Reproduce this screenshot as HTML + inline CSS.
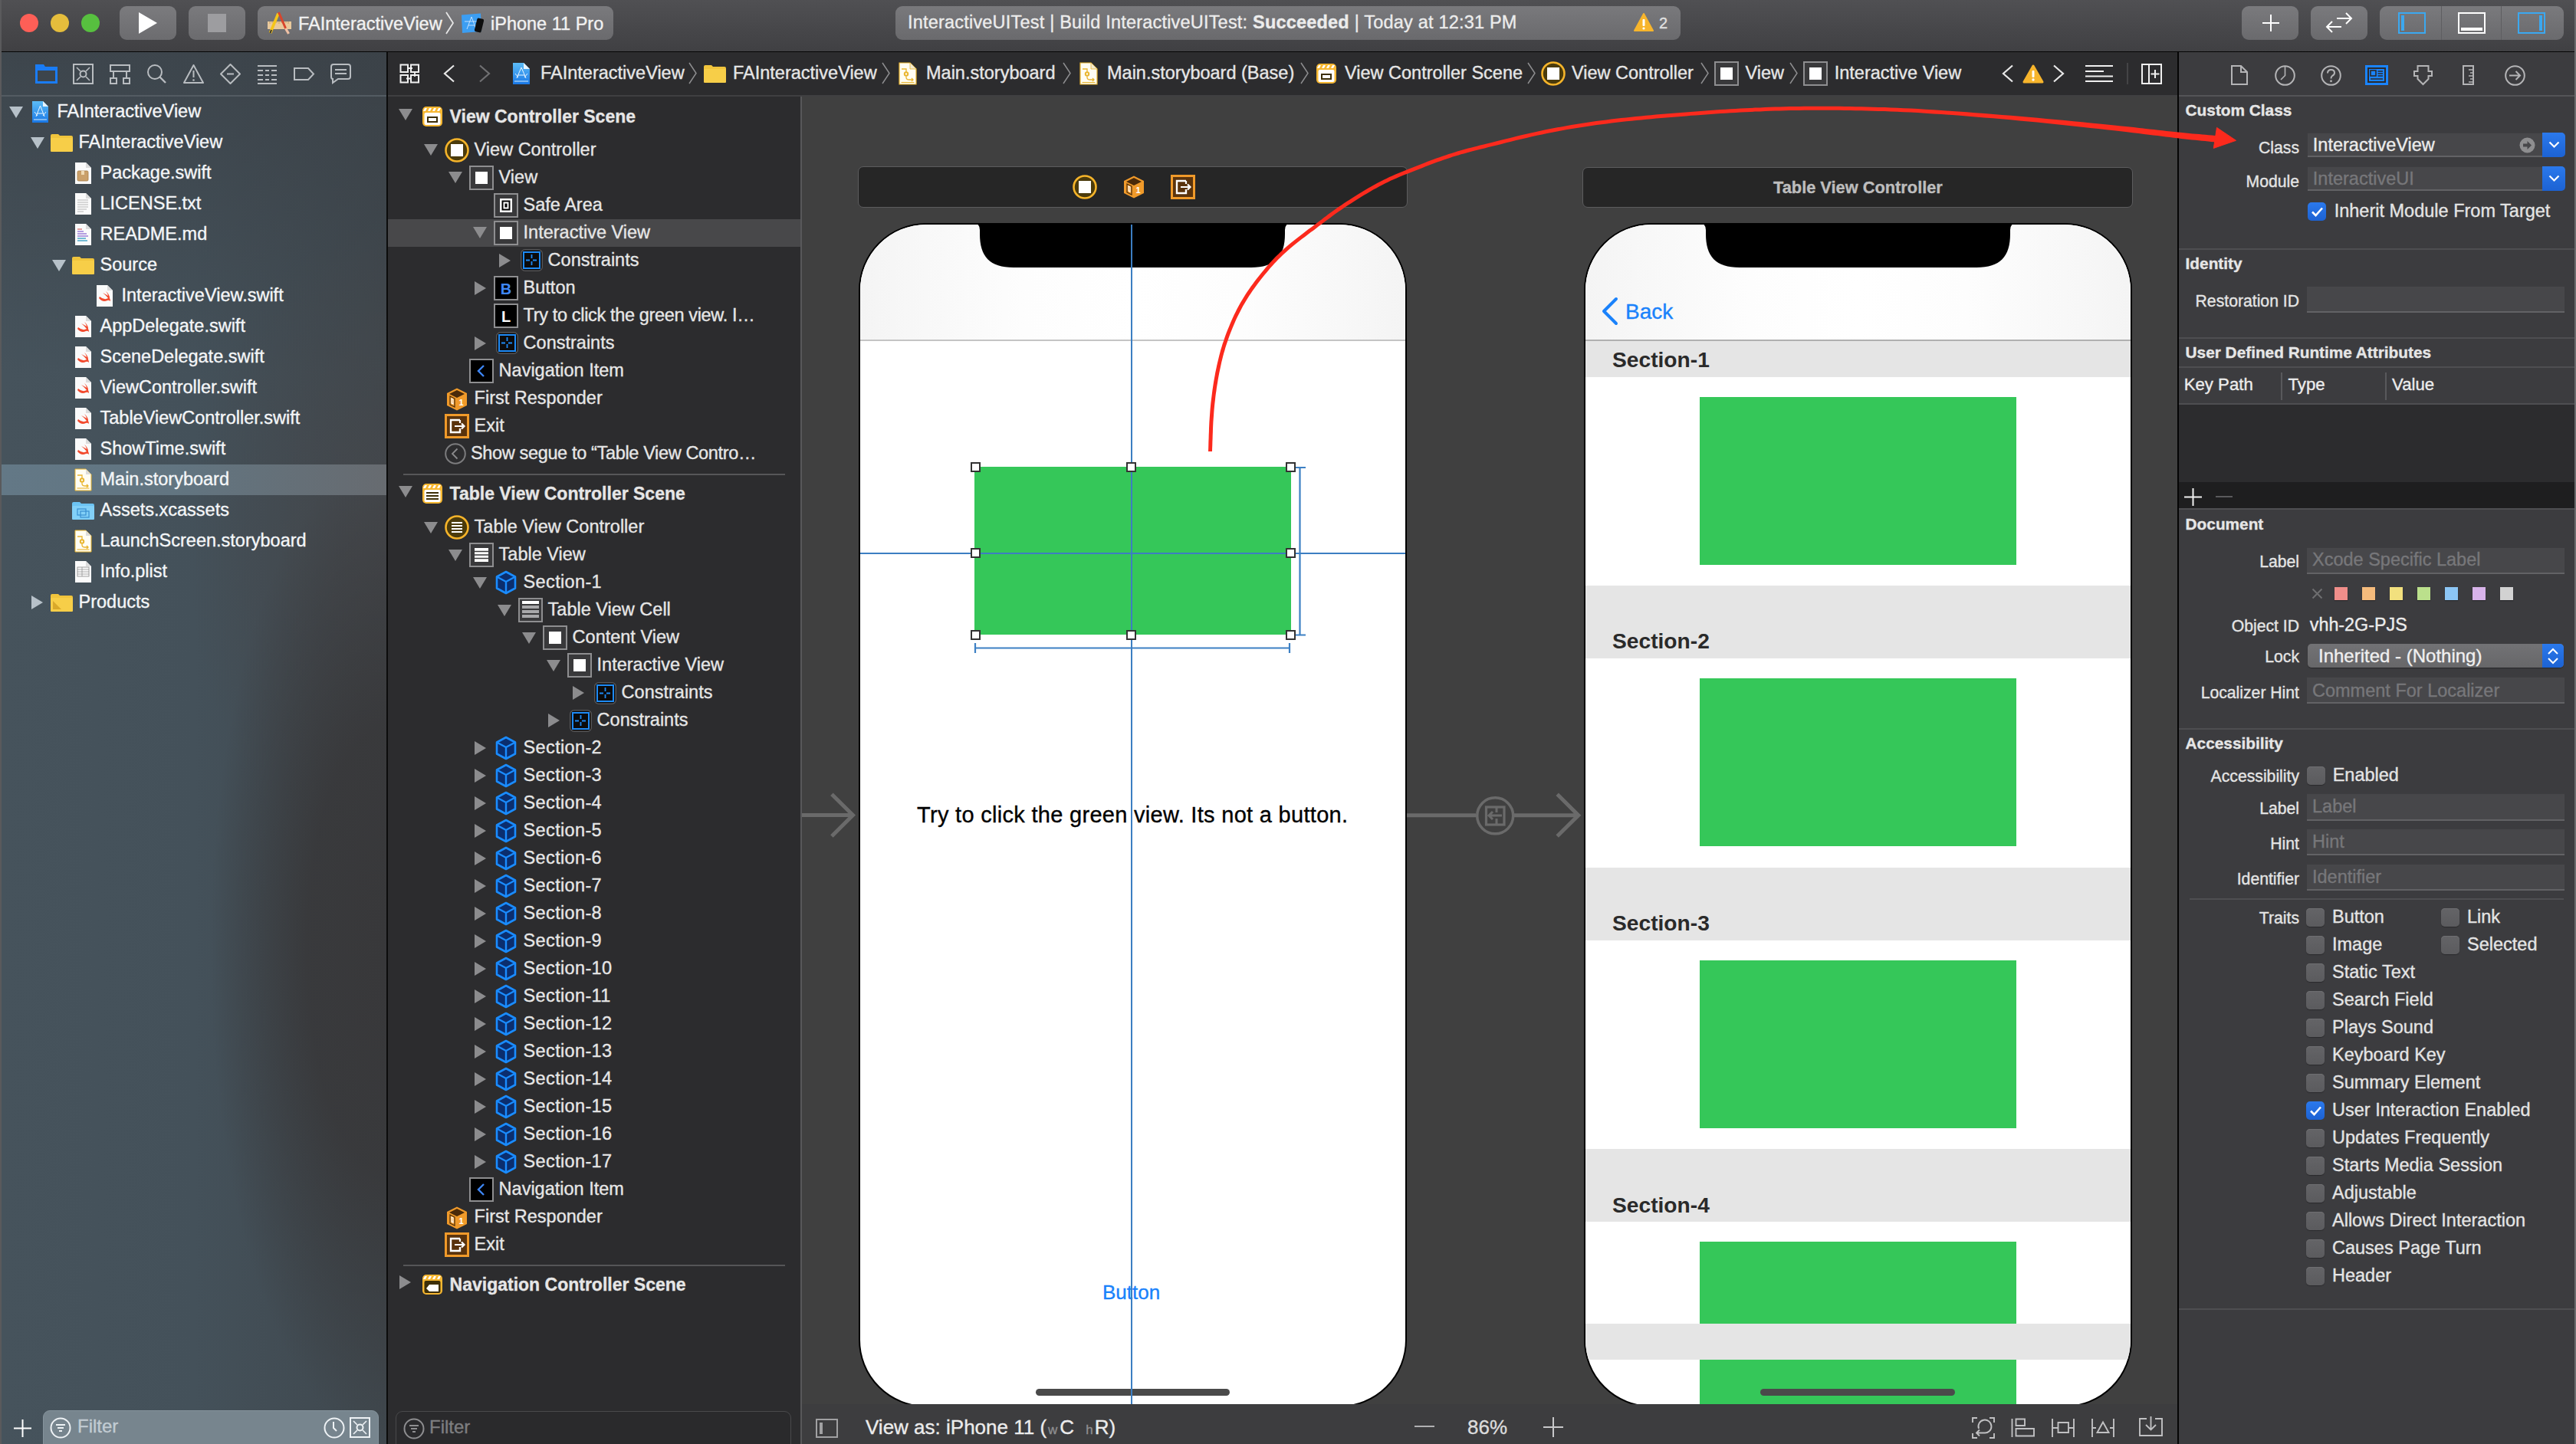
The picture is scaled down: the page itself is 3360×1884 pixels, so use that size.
<!DOCTYPE html>
<html><head><meta charset="utf-8"><title>Xcode</title>
<style>
*{margin:0;padding:0;box-sizing:border-box}
html,body{width:3360px;height:1884px;overflow:hidden;background:#404040;font-family:"Liberation Sans",sans-serif;position:relative}
.a{position:absolute}
.t{position:absolute;white-space:nowrap;line-height:1;-webkit-text-stroke:0.35px currentColor}
svg{position:absolute;overflow:visible}

</style></head><body>
<!-- TOOLBAR -->
<div class="a" style="left:0;top:0;width:3360px;height:67px;background:linear-gradient(#505053,#404043)"></div>
<div class="a" style="left:0;top:66.5px;width:3360px;height:1.5px;background:#050505"></div>
<div class="a" style="left:26px;top:18px;width:24px;height:24px;border-radius:50%;background:#fe5f57"></div>
<div class="a" style="left:66px;top:18px;width:24px;height:24px;border-radius:50%;background:#e5bd3c"></div>
<div class="a" style="left:106px;top:18px;width:24px;height:24px;border-radius:50%;background:#57c03f"></div>
<div class="a" style="left:156px;top:8px;width:74px;height:44px;border-radius:9px;background:linear-gradient(#7b7b7e,#6c6c6f)"></div>
<svg style="left:180px;top:15px" width="26" height="30"><path d="M1 1 L25 15 L1 29 Z" fill="#fff"/></svg>
<div class="a" style="left:246px;top:8px;width:74px;height:44px;border-radius:9px;background:linear-gradient(#7a7a7d,#6b6b6e)"></div>
<div class="a" style="left:271px;top:18px;width:24px;height:24px;background:#9d9da0"></div>
<div class="a" style="left:336px;top:8px;width:464px;height:44px;border-radius:9px;background:linear-gradient(#7a7a7d,#6a6a6d)"></div>
<svg style="left:348px;top:14px" width="34" height="32">
 <rect x="1" y="14" width="31" height="10" fill="#e9c99c"/>
 <path d="M4 14 V17 M7 14 V16 M10 14 V17 M13 14 V16 M16 14 V17 M19 14 V16 M22 14 V17 M25 14 V16 M28 14 V17" stroke="#b38a58" stroke-width="0.7"/>
 <path d="M4.5 29 L15 3.5" stroke="#f5c518" stroke-width="3.6"/>
 <path d="M4.5 29 L6 25" stroke="#333" stroke-width="2"/>
 <path d="M15.5 2 L25 24" stroke="#d8452c" stroke-width="3"/>
 <path d="M24.5 23 L28.5 30" stroke="#f0c1a4" stroke-width="3.2"/>
</svg>
<div class="t" style="left:389px;top:19.5px;font-size:23.5px;color:#f2f2f2">FAInteractiveView</div>
<svg style="left:580px;top:15px" width="14" height="30"><path d="M2 1 L11 15 L2 29" stroke="#e6e6e6" stroke-width="1.8" fill="none"/></svg>
<svg style="left:601px;top:17px" width="32" height="28">
 <path d="M1 2.5 L26 0.5 L27 24 L2 26 Z" fill="#3c9ef2"/>
 <path d="M8 21 L14 5 L20 21 M10 16 L18 16 M5 11 L23 11" stroke="#cfe6ff" stroke-width="0.9" fill="none"/>
 <rect x="19.5" y="7" width="9" height="18" rx="2" fill="#0e0e0e" transform="rotate(14 24 16)"/>
</svg>
<div class="t" style="left:640px;top:19.5px;font-size:23.5px;color:#f2f2f2">iPhone 11 Pro</div>
<div class="a" style="left:1168px;top:8px;width:1024px;height:44px;border-radius:9px;background:linear-gradient(#79797c,#6a6a6d)"></div>
<div class="t" style="left:1184px;top:18px;font-size:23.5px;letter-spacing:0.2px;color:#ececec">InteractiveUITest | Build InteractiveUITest: <b>Succeeded</b> | Today at 12:31 PM</div>
<svg style="left:2131px;top:17px" width="26" height="24"><path d="M13 1 L25 23 L1 23 Z" fill="#f7b52c" stroke="#f7b52c" stroke-linejoin="round" stroke-width="2"/><rect x="11.5" y="8" width="3" height="9" rx="1" fill="#fff"/><circle cx="13" cy="20" r="1.6" fill="#fff"/></svg>
<div class="t" style="left:2164px;top:20px;font-size:20px;color:#e0e0e0">2</div>
<div class="a" style="left:2924px;top:8px;width:74px;height:44px;border-radius:9px;background:linear-gradient(#7a7a7d,#6a6a6d)"></div>
<svg style="left:2950px;top:18px" width="24" height="24"><path d="M12 1 V23 M1 12 H23" stroke="#fff" stroke-width="2"/></svg>
<div class="a" style="left:3014px;top:8px;width:74px;height:44px;border-radius:9px;background:linear-gradient(#7a7a7d,#6a6a6d)"></div>
<svg style="left:3032px;top:16px" width="38" height="28"><path d="M16 8 H35 M28 1 L35 8 L28 15 M22 19 H3 M10 12 L3 19 L10 26" stroke="#fff" stroke-width="2" fill="none"/></svg>
<div class="a" style="left:3104px;top:8px;width:240px;height:44px;border-radius:9px;background:linear-gradient(#7a7a7d,#6a6a6d)"></div>
<div class="a" style="left:3184px;top:8px;width:1px;height:44px;background:#5e5e61"></div>
<div class="a" style="left:3262px;top:8px;width:1px;height:44px;background:#5e5e61"></div>
<svg style="left:3128px;top:16px" width="37" height="29"><rect x="1" y="1" width="34" height="26" fill="none" stroke="#3ba8f0" stroke-width="2"/><rect x="4" y="4" width="4" height="20" fill="#3ba8f0"/></svg>
<svg style="left:3206px;top:16px" width="37" height="29"><rect x="1" y="1" width="34" height="26" fill="none" stroke="#fff" stroke-width="2"/><rect x="4" y="20" width="28" height="4" fill="#fff"/></svg>
<svg style="left:3284px;top:16px" width="37" height="29"><rect x="1" y="1" width="34" height="26" fill="none" stroke="#3ba8f0" stroke-width="2"/><rect x="28" y="4" width="4" height="20" fill="#3ba8f0"/></svg>
<div class="a" style="left:0;top:0;width:2px;height:1884px;background:#5a5a5c"></div>
<!-- NAVIGATOR -->
<div class="a" style="left:2px;top:68px;width:502px;height:1816px;background:radial-gradient(ellipse 230px 640px at 100% 1170px,rgba(56,56,58,1) 0%,rgba(56,56,58,0.9) 45%,rgba(56,56,58,0) 100%),radial-gradient(ellipse 260px 420px at 100% 640px,rgba(70,70,73,0.7) 0%,rgba(70,70,73,0) 100%),linear-gradient(180deg,rgba(58,64,70,0.7) 0px,rgba(58,64,70,0) 420px),linear-gradient(90deg,#46535c 0%,#44515a 50%,#3f474d 100%)"></div>
<div class="a" style="left:504px;top:68px;width:2px;height:1816px;background:#0c0c0c"></div>
<div class="a" style="left:2px;top:124px;width:502px;height:2px;background:#535b62"></div>
<svg style="left:45px;top:83px" width="31" height="27"><path d="M1 1 H12 L14 4 H30 V26 H1 Z" fill="#1a7cf5"/><rect x="4" y="9" width="23" height="14" fill="#3d454c"/></svg>
<svg style="left:95px;top:83px" width="27" height="27"><rect x="1" y="1" width="25" height="25" fill="none" stroke="#b8bcc0" stroke-width="2"/><circle cx="13.5" cy="13.5" r="4" fill="none" stroke="#b8bcc0" stroke-width="2"/><path d="M5 5 L10 10 M22 5 L17 10 M5 22 L10 17 M22 22 L17 17" stroke="#b8bcc0" stroke-width="1.6"/></svg>
<svg style="left:143px;top:84px" width="27" height="26"><rect x="1" y="1" width="25" height="8" fill="none" stroke="#b8bcc0" stroke-width="2"/><rect x="1" y="18" width="8" height="7" fill="none" stroke="#b8bcc0" stroke-width="2"/><rect x="18" y="18" width="8" height="7" fill="none" stroke="#b8bcc0" stroke-width="2"/><path d="M5 9 V18 M22 9 V18" stroke="#b8bcc0" stroke-width="2"/></svg>
<svg style="left:191px;top:83px" width="27" height="27"><circle cx="11" cy="11" r="9" fill="none" stroke="#b8bcc0" stroke-width="2"/><path d="M17.5 17.5 L25 25" stroke="#b8bcc0" stroke-width="2.4"/></svg>
<svg style="left:239px;top:83px" width="27" height="27"><path d="M13.5 2 L26 25 H1 Z" fill="none" stroke="#b8bcc0" stroke-width="2" stroke-linejoin="round"/><path d="M13.5 9 V18" stroke="#b8bcc0" stroke-width="2"/><circle cx="13.5" cy="21.5" r="1.3" fill="#b8bcc0"/></svg>
<svg style="left:287px;top:83px" width="27" height="27"><path d="M13.5 1 L26 13.5 L13.5 26 L1 13.5 Z" fill="none" stroke="#b8bcc0" stroke-width="2" stroke-linejoin="round"/><path d="M9 13.5 H18" stroke="#b8bcc0" stroke-width="2"/></svg>
<svg style="left:335px;top:84px" width="27" height="26"><path d="M1 2 H26 M1 8 H8 M11 8 H16 M19 8 H26 M1 14 H8 M11 14 H16 M19 14 H26 M1 20 H8 M11 20 H16 M19 20 H26 M1 25 H26" stroke="#b8bcc0" stroke-width="2"/></svg>
<svg style="left:383px;top:88px" width="27" height="17"><path d="M1 1 H19 L26 8.5 L19 16 H1 Z" fill="none" stroke="#b8bcc0" stroke-width="2"/></svg>
<svg style="left:431px;top:83px" width="27" height="27"><path d="M4 1 H23 Q26 1 26 4 V17 Q26 20 23 20 H10 L3 25 V20 Q1 20 1 17 V4 Q1 1 4 1 Z" fill="none" stroke="#b8bcc0" stroke-width="2"/><path d="M6 8 H21 M6 13 H21" stroke="#b8bcc0" stroke-width="2"/></svg>
<div class="a" style="left:2px;top:606px;width:502px;height:40px;background:linear-gradient(90deg,#637886 0%,#627581 45%,#676b70 100%)"></div>
<svg style="left:11.5px;top:138.5px" width="18" height="15"><path d="M0 0 H18 L9 15 Z" fill="#b7c1c9"/></svg>
<svg style="left:41px;top:130.5px" width="23" height="30"><defs><linearGradient id="pg" x1="0" y1="0" x2="0" y2="1"><stop offset="0" stop-color="#5cbcf7"/><stop offset="1" stop-color="#1a78e6"/></linearGradient></defs><path d="M1 1 H15 L22 8 V29 H1 Z" fill="url(#pg)"/><path d="M15 1 V8 H22 Z" fill="#e8f4fd"/><path d="M3 25 H20" stroke="#d6ecfc" stroke-width="1"/><path d="M6 21 L11.5 7 L17 21 M7.5 17 H15.5 M4 15 L8 20 M19 15 L15 20" stroke="#e9f5ff" stroke-width="1" fill="none"/></svg>
<div class="t" style="left:74.5px;top:133.6px;font-size:23.5px;color:#f4f6f8">FAInteractiveView</div>
<svg style="left:39.5px;top:178.5px" width="18" height="15"><path d="M0 0 H18 L9 15 Z" fill="#b7c1c9"/></svg>
<svg style="left:64.5px;top:173.5px" width="31" height="25"><path d="M1 3 Q1 1 3 1 H11 L13 3 H28 Q30 3 30 5 V22 Q30 24 28 24 H3 Q1 24 1 22 Z" fill="#f0c43c"/><rect x="1" y="6" width="29" height="18" rx="1.5" fill="#f7ce48"/></svg>
<div class="t" style="left:102.5px;top:173.6px;font-size:23.5px;color:#f4f6f8">FAInteractiveView</div>
<svg style="left:96.5px;top:210.5px" width="23" height="30"><path d="M1 1 H15 L22 8 V29 H1 Z" fill="#fafafa" stroke="none" stroke-width="1"/><path d="M15 1 V8 H22" fill="#dcdcdc"/><rect x="4" y="12" width="14" height="13" rx="1.5" fill="#caa06a" stroke="#a57c45" stroke-width="0.8"/><rect x="9" y="12" width="4" height="5" fill="#efd9b3"/></svg>
<div class="t" style="left:130.5px;top:213.6px;font-size:23.5px;color:#f4f6f8">Package.swift</div>
<svg style="left:96.5px;top:250.5px" width="23" height="30"><path d="M1 1 H15 L22 8 V29 H1 Z" fill="#fafafa" stroke="none" stroke-width="1"/><path d="M15 1 V8 H22" fill="#dcdcdc"/><path d="M4 10 H18 M4 13 H18 M4 16 H18 M4 19 H18 M4 22 H16 M4 25 H12" stroke="#9a9a9a" stroke-width="0.7"/></svg>
<div class="t" style="left:130.5px;top:253.6px;font-size:23.5px;color:#f4f6f8">LICENSE.txt</div>
<svg style="left:96.5px;top:290.5px" width="23" height="30"><path d="M1 1 H15 L22 8 V29 H1 Z" fill="#fafafa" stroke="none" stroke-width="1"/><path d="M15 1 V8 H22" fill="#dcdcdc"/><path d="M4 11 H12 M4 14 H16 M4 17 H18" stroke="#9c7fd8" stroke-width="1.3"/><path d="M4 20 H15 M4 23 H17" stroke="#4aa7c9" stroke-width="1.3"/><path d="M4 8 H10" stroke="#d86f6f" stroke-width="1.3"/></svg>
<div class="t" style="left:130.5px;top:293.6px;font-size:23.5px;color:#f4f6f8">README.md</div>
<svg style="left:67.5px;top:338.5px" width="18" height="15"><path d="M0 0 H18 L9 15 Z" fill="#b7c1c9"/></svg>
<svg style="left:92.5px;top:333.5px" width="31" height="25"><path d="M1 3 Q1 1 3 1 H11 L13 3 H28 Q30 3 30 5 V22 Q30 24 28 24 H3 Q1 24 1 22 Z" fill="#f0c43c"/><rect x="1" y="6" width="29" height="18" rx="1.5" fill="#f7ce48"/></svg>
<div class="t" style="left:130.5px;top:333.6px;font-size:23.5px;color:#f4f6f8">Source</div>
<svg style="left:124.5px;top:370.5px" width="23" height="30"><path d="M1 1 H15 L22 8 V29 H1 Z" fill="#fafafa" stroke="none" stroke-width="1"/><path d="M15 1 V8 H22" fill="#dcdcdc"/><path d="M5 16 Q11 21 16 18 Q13 14 9 11 Q13 13 16 15 Q15 11 13 9 Q18 13 18 18 Q19 20 19 22 Q17 20 15 21 Q9 24 4 18 Z" fill="#f24a2e"/></svg>
<div class="t" style="left:158.5px;top:373.6px;font-size:23.5px;color:#f4f6f8">InteractiveView.swift</div>
<svg style="left:96.5px;top:410.5px" width="23" height="30"><path d="M1 1 H15 L22 8 V29 H1 Z" fill="#fafafa" stroke="none" stroke-width="1"/><path d="M15 1 V8 H22" fill="#dcdcdc"/><path d="M5 16 Q11 21 16 18 Q13 14 9 11 Q13 13 16 15 Q15 11 13 9 Q18 13 18 18 Q19 20 19 22 Q17 20 15 21 Q9 24 4 18 Z" fill="#f24a2e"/></svg>
<div class="t" style="left:130.5px;top:413.6px;font-size:23.5px;color:#f4f6f8">AppDelegate.swift</div>
<svg style="left:96.5px;top:450.5px" width="23" height="30"><path d="M1 1 H15 L22 8 V29 H1 Z" fill="#fafafa" stroke="none" stroke-width="1"/><path d="M15 1 V8 H22" fill="#dcdcdc"/><path d="M5 16 Q11 21 16 18 Q13 14 9 11 Q13 13 16 15 Q15 11 13 9 Q18 13 18 18 Q19 20 19 22 Q17 20 15 21 Q9 24 4 18 Z" fill="#f24a2e"/></svg>
<div class="t" style="left:130.5px;top:453.6px;font-size:23.5px;color:#f4f6f8">SceneDelegate.swift</div>
<svg style="left:96.5px;top:490.5px" width="23" height="30"><path d="M1 1 H15 L22 8 V29 H1 Z" fill="#fafafa" stroke="none" stroke-width="1"/><path d="M15 1 V8 H22" fill="#dcdcdc"/><path d="M5 16 Q11 21 16 18 Q13 14 9 11 Q13 13 16 15 Q15 11 13 9 Q18 13 18 18 Q19 20 19 22 Q17 20 15 21 Q9 24 4 18 Z" fill="#f24a2e"/></svg>
<div class="t" style="left:130.5px;top:493.6px;font-size:23.5px;color:#f4f6f8">ViewController.swift</div>
<svg style="left:96.5px;top:530.5px" width="23" height="30"><path d="M1 1 H15 L22 8 V29 H1 Z" fill="#fafafa" stroke="none" stroke-width="1"/><path d="M15 1 V8 H22" fill="#dcdcdc"/><path d="M5 16 Q11 21 16 18 Q13 14 9 11 Q13 13 16 15 Q15 11 13 9 Q18 13 18 18 Q19 20 19 22 Q17 20 15 21 Q9 24 4 18 Z" fill="#f24a2e"/></svg>
<div class="t" style="left:130.5px;top:533.6px;font-size:23.5px;color:#f4f6f8">TableViewController.swift</div>
<svg style="left:96.5px;top:570.5px" width="23" height="30"><path d="M1 1 H15 L22 8 V29 H1 Z" fill="#fafafa" stroke="none" stroke-width="1"/><path d="M15 1 V8 H22" fill="#dcdcdc"/><path d="M5 16 Q11 21 16 18 Q13 14 9 11 Q13 13 16 15 Q15 11 13 9 Q18 13 18 18 Q19 20 19 22 Q17 20 15 21 Q9 24 4 18 Z" fill="#f24a2e"/></svg>
<div class="t" style="left:130.5px;top:573.6px;font-size:23.5px;color:#f4f6f8">ShowTime.swift</div>
<svg style="left:96.5px;top:610.5px" width="23" height="30"><path d="M1 1 H15 L22 8 V29 H1 Z" fill="#fffdf3" stroke="#e9b52e" stroke-width="1"/><path d="M15 1 V8 H22" fill="#dcdcdc"/><path d="M4 9 H10 V13" stroke="#e9b52e" stroke-width="1.3" fill="none"/><circle cx="10" cy="15.5" r="3.2" fill="#e9b52e"/><circle cx="10" cy="15.5" r="1.2" fill="#fffdf3"/><path d="M10 18.5 V20 Q10 23 14 23 H18 M16 21 L18 23 L16 25" stroke="#e9b52e" stroke-width="1.3" fill="none"/><path d="M3.5 26 H19.5" stroke="#e9b52e" stroke-width="1.1"/></svg>
<div class="t" style="left:130.5px;top:613.6px;font-size:23.5px;color:#f4f6f8">Main.storyboard</div>
<svg style="left:92.5px;top:653.5px" width="31" height="25"><path d="M1 3 Q1 1 3 1 H11 L13 3 H28 Q30 3 30 5 V22 Q30 24 28 24 H3 Q1 24 1 22 Z" fill="#6cc3f2"/><rect x="1" y="6" width="29" height="18" rx="1.5" fill="#82d0f7"/><rect x="8" y="10" width="11" height="8" fill="none" stroke="#3a8fd0" stroke-width="1.2"/><rect x="12" y="13" width="11" height="8" fill="none" stroke="#3a8fd0" stroke-width="1.2"/></svg>
<div class="t" style="left:130.5px;top:653.6px;font-size:23.5px;color:#f4f6f8">Assets.xcassets</div>
<svg style="left:96.5px;top:690.5px" width="23" height="30"><path d="M1 1 H15 L22 8 V29 H1 Z" fill="#fffdf3" stroke="#e9b52e" stroke-width="1"/><path d="M15 1 V8 H22" fill="#dcdcdc"/><path d="M4 9 H10 V13" stroke="#e9b52e" stroke-width="1.3" fill="none"/><circle cx="10" cy="15.5" r="3.2" fill="#e9b52e"/><circle cx="10" cy="15.5" r="1.2" fill="#fffdf3"/><path d="M10 18.5 V20 Q10 23 14 23 H18 M16 21 L18 23 L16 25" stroke="#e9b52e" stroke-width="1.3" fill="none"/><path d="M3.5 26 H19.5" stroke="#e9b52e" stroke-width="1.1"/></svg>
<div class="t" style="left:130.5px;top:693.6px;font-size:23.5px;color:#f4f6f8">LaunchScreen.storyboard</div>
<svg style="left:96.5px;top:730.5px" width="23" height="30"><path d="M1 1 H15 L22 8 V29 H1 Z" fill="#fafafa" stroke="none" stroke-width="1"/><path d="M15 1 V8 H22" fill="#dcdcdc"/><rect x="4" y="9" width="15" height="12" fill="none" stroke="#8a8a8a" stroke-width="0.8"/><path d="M4 12 H19 M4 15 H19 M4 18 H19 M10 9 V21" stroke="#8a8a8a" stroke-width="0.7"/></svg>
<div class="t" style="left:130.5px;top:733.6px;font-size:23.5px;color:#f4f6f8">Info.plist</div>
<svg style="left:40.5px;top:776.5px" width="15" height="18"><path d="M0 0 V18 L15 9 Z" fill="#b7c1c9"/></svg>
<svg style="left:64.5px;top:773.5px" width="31" height="25"><path d="M1 3 Q1 1 3 1 H11 L13 3 H28 Q30 3 30 5 V22 Q30 24 28 24 H3 Q1 24 1 22 Z" fill="#f0c43c"/><rect x="1" y="6" width="29" height="18" rx="1.5" fill="#f7ce48"/><path d="M4 10 L4 21 H15 Z" fill="#d9a92a"/></svg>
<div class="t" style="left:102.5px;top:773.6px;font-size:23.5px;color:#f4f6f8">Products</div>
<svg style="left:18px;top:1852px" width="23" height="23"><path d="M11.5 0 V23 M0 11.5 H23" stroke="#fff" stroke-width="2"/></svg>
<div class="a" style="left:56px;top:1840px;width:438px;height:60px;border-radius:9px;background:#77858e;border:1px solid #85939c"></div>
<svg style="left:65px;top:1849px" width="28" height="28"><circle cx="14" cy="14" r="12.5" fill="none" stroke="#eef2f5" stroke-width="2"/><path d="M8 10 H20 M10 14 H18 M12 18 H16" stroke="#eef2f5" stroke-width="2"/></svg>
<div class="t" style="left:101px;top:1849px;font-size:24px;color:#c2ccd3">Filter</div>
<svg style="left:422px;top:1849px" width="28" height="28"><circle cx="14" cy="14" r="12.5" fill="none" stroke="#eef2f5" stroke-width="2"/><path d="M13 6 V14 L17 18" stroke="#eef2f5" stroke-width="2" fill="none"/></svg>
<svg style="left:456px;top:1849px" width="27" height="27"><rect x="1" y="1" width="25" height="25" fill="none" stroke="#eef2f5" stroke-width="2"/><circle cx="13.5" cy="13.5" r="4" fill="none" stroke="#eef2f5" stroke-width="2"/><path d="M5 5 L10 10 M22 5 L17 10 M5 22 L10 17 M22 22 L17 17" stroke="#eef2f5" stroke-width="1.6"/></svg><!-- JUMP BAR -->
<div class="a" style="left:506px;top:68px;width:2334px;height:56px;background:#2c2c2e"></div>
<div class="a" style="left:506px;top:124px;width:2334px;height:2px;background:#3f3f41"></div>
<svg style="left:521px;top:83px" width="27" height="26"><path d="M1.5 1.5 H11 V11 H1.5 Z M15 1.5 H25 V11 H15 Z M1.5 15 H11 V24.5 H1.5 Z M15 15 H25 V24.5 H15 Z" fill="none" stroke="#f0f0f0" stroke-width="2"/><path d="M11 6 H17 M20 11 V17 M9 19.5 H15" stroke="#f0f0f0" stroke-width="1.8"/></svg>
<svg style="left:577px;top:84px" width="17" height="24"><path d="M15 1.5 L3 12 L15 22.5" stroke="#e8e8e8" stroke-width="2.2" fill="none"/></svg>
<svg style="left:624px;top:84px" width="17" height="24"><path d="M2 1.5 L14 12 L2 22.5" stroke="#707072" stroke-width="2.2" fill="none"/></svg>
<svg style="left:668px;top:81px" width="24" height="30"><defs><linearGradient id="pg2" x1="0" y1="0" x2="0" y2="1"><stop offset="0" stop-color="#5cbcf7"/><stop offset="1" stop-color="#1a78e6"/></linearGradient></defs><path d="M1 1 H15 L23 9 V29 H1 Z" fill="url(#pg2)"/><path d="M15 1 V9 H23 Z" fill="#e8f4fd"/><path d="M3 25 H21" stroke="#d6ecfc" stroke-width="1"/><path d="M6 21 L12 7 L18 21 M7.5 17 H16.5 M4 15 L8 20 M20 15 L16 20" stroke="#e9f5ff" stroke-width="1" fill="none"/></svg>
<div class="t" style="left:705px;top:84.1px;font-size:23.5px;color:#e6e6e6;font-weight:400;">FAInteractiveView</div>
<svg style="left:898px;top:81px" width="11" height="29"><path d="M1 1 L10 14.5 L1 28" stroke="#8e8e90" stroke-width="1.5" fill="none"/></svg>
<svg style="left:917px;top:84px" width="31" height="25"><path d="M1 3 Q1 1 3 1 H11 L13 3 H28 Q30 3 30 5 V22 Q30 24 28 24 H3 Q1 24 1 22 Z" fill="#f0c43c"/><rect x="1" y="6" width="29" height="18" rx="1.5" fill="#f7ce48"/></svg>
<div class="t" style="left:956px;top:84.1px;font-size:23.5px;color:#e6e6e6;font-weight:400;">FAInteractiveView</div>
<svg style="left:1150px;top:81px" width="11" height="29"><path d="M1 1 L10 14.5 L1 28" stroke="#8e8e90" stroke-width="1.5" fill="none"/></svg>
<svg style="left:1172px;top:81px" width="24" height="30"><path d="M1 1 H15 L23 9 V29 H1 Z" fill="#fffdf3" stroke="#e9b52e" stroke-width="1.2"/><path d="M15 1 V9 H23" fill="#f3ead0" stroke="#e9b52e" stroke-width="0.8"/><path d="M4 9 H10 V13" stroke="#e9b52e" stroke-width="1.3" fill="none"/><circle cx="10" cy="15.5" r="3.2" fill="#e9b52e"/><circle cx="10" cy="15.5" r="1.2" fill="#fffdf3"/><path d="M10 18.5 V20 Q10 23 14 23 H19 M17 21 L19 23 L17 25" stroke="#e9b52e" stroke-width="1.3" fill="none"/><path d="M3.5 26.5 H20.5" stroke="#e9b52e" stroke-width="1.1"/></svg>
<div class="t" style="left:1208px;top:84.1px;font-size:23.5px;color:#e6e6e6;font-weight:400;">Main.storyboard</div>
<svg style="left:1386px;top:81px" width="11" height="29"><path d="M1 1 L10 14.5 L1 28" stroke="#8e8e90" stroke-width="1.5" fill="none"/></svg>
<svg style="left:1408px;top:81px" width="24" height="30"><path d="M1 1 H15 L23 9 V29 H1 Z" fill="#fffdf3" stroke="#e9b52e" stroke-width="1.2"/><path d="M15 1 V9 H23" fill="#f3ead0" stroke="#e9b52e" stroke-width="0.8"/><path d="M4 9 H10 V13" stroke="#e9b52e" stroke-width="1.3" fill="none"/><circle cx="10" cy="15.5" r="3.2" fill="#e9b52e"/><circle cx="10" cy="15.5" r="1.2" fill="#fffdf3"/><path d="M10 18.5 V20 Q10 23 14 23 H19 M17 21 L19 23 L17 25" stroke="#e9b52e" stroke-width="1.3" fill="none"/><path d="M3.5 26.5 H20.5" stroke="#e9b52e" stroke-width="1.1"/></svg>
<div class="t" style="left:1444px;top:84.1px;font-size:23.5px;color:#e6e6e6;font-weight:400;">Main.storyboard (Base)</div>
<svg style="left:1696px;top:81px" width="11" height="29"><path d="M1 1 L10 14.5 L1 28" stroke="#8e8e90" stroke-width="1.5" fill="none"/></svg>
<svg style="left:1716px;top:82px" width="28" height="28"><rect x="1" y="1" width="26" height="26" rx="5" fill="#f7b731"/><path d="M4 3 L7 3 L5 7 L2 7 Z M10 3 L13 3 L11 7 L8 7 Z M16 3 L19 3 L17 7 L14 7 Z M22 3 L25 3 L23 7 L20 7 Z" fill="#fff"/><rect x="3.5" y="9" width="21" height="16" rx="2" fill="#fff"/><rect x="8" y="15" width="12" height="6" fill="none" stroke="#3d2f08" stroke-width="2"/></svg>
<div class="t" style="left:1754px;top:84.1px;font-size:23.5px;color:#e6e6e6;font-weight:400;">View Controller Scene</div>
<svg style="left:1992px;top:81px" width="11" height="29"><path d="M1 1 L10 14.5 L1 28" stroke="#8e8e90" stroke-width="1.5" fill="none"/></svg>
<svg style="left:2010px;top:80px" width="32" height="32"><circle cx="16.0" cy="16.0" r="14.5" fill="#4b3b0c" stroke="#f5b42a" stroke-width="2.6"/><rect x="8.0" y="8.0" width="16" height="16" fill="#fff"/></svg>
<div class="t" style="left:2050px;top:84.1px;font-size:23.5px;color:#e6e6e6;font-weight:400;">View Controller</div>
<svg style="left:2218px;top:81px" width="11" height="29"><path d="M1 1 L10 14.5 L1 28" stroke="#8e8e90" stroke-width="1.5" fill="none"/></svg>
<svg style="left:2236px;top:80px" width="32" height="32"><rect x="1" y="1" width="30" height="30" fill="#39393b" stroke="#8e8e90" stroke-width="2"/><rect x="8" y="8" width="16" height="16" fill="#fff"/></svg>
<div class="t" style="left:2276.5px;top:84.1px;font-size:23.5px;color:#e6e6e6;font-weight:400;">View</div>
<svg style="left:2334px;top:81px" width="11" height="29"><path d="M1 1 L10 14.5 L1 28" stroke="#8e8e90" stroke-width="1.5" fill="none"/></svg>
<svg style="left:2352px;top:80px" width="32" height="32"><rect x="1" y="1" width="30" height="30" fill="#39393b" stroke="#8e8e90" stroke-width="2"/><rect x="8" y="8" width="16" height="16" fill="#fff"/></svg>
<div class="t" style="left:2392.7px;top:84.1px;font-size:23.5px;color:#e6e6e6;font-weight:400;">Interactive View</div>
<svg style="left:2610px;top:84px" width="17" height="24"><path d="M15 1.5 L3 12 L15 22.5" stroke="#e8e8e8" stroke-width="2.2" fill="none"/></svg>
<svg style="left:2638px;top:84px" width="28" height="25"><path d="M14 2 L26 23 H2 Z" fill="#f7b52c" stroke="#f7b52c" stroke-linejoin="round" stroke-width="3"/><rect x="12.5" y="8" width="3" height="9" rx="1" fill="#fff"/><circle cx="14" cy="20" r="1.7" fill="#fff"/></svg>
<svg style="left:2677px;top:84px" width="17" height="24"><path d="M2 1.5 L14 12 L2 22.5" stroke="#e8e8e8" stroke-width="2.2" fill="none"/></svg>
<svg style="left:2719px;top:84px" width="38" height="24"><path d="M1 2 H37 M1 9 H25 M1 15.5 H37 M1 22 H37" stroke="#f0f0f0" stroke-width="2"/></svg>
<div class="a" style="left:2774px;top:82px;width:2px;height:28px;background:#444446"></div>
<svg style="left:2793px;top:83px" width="27" height="27"><rect x="1" y="1" width="25" height="25" fill="none" stroke="#f0f0f0" stroke-width="2"/><path d="M10 1 V26 M18 8 V19 M12.5 13.5 H23.5" stroke="#f0f0f0" stroke-width="2"/></svg>
<!-- OUTLINE -->
<div class="a" style="left:506px;top:126px;width:538px;height:1758px;background:#2c2c2e"></div>
<div class="a" style="left:1044px;top:126px;width:2px;height:1758px;background:#58585a"></div>
<div class="a" style="left:506px;top:286px;width:538px;height:36px;background:#48484a"></div>
<svg style="left:520px;top:142px" width="18" height="15"><path d="M0 0 H18 L9 15 Z" fill="#8c8c8e"/></svg>
<svg style="left:550px;top:138px" width="28" height="28"><rect x="1" y="1" width="26" height="26" rx="5" fill="#f7b731"/><path d="M4 3 L7 3 L5 7 L2 7 Z M10 3 L13 3 L11 7 L8 7 Z M16 3 L19 3 L17 7 L14 7 Z M22 3 L25 3 L23 7 L20 7 Z" fill="#fff"/><rect x="3.5" y="9" width="21" height="16" rx="2" fill="#fff"/><rect x="8" y="15" width="12" height="6" fill="none" stroke="#3d2f08" stroke-width="2"/></svg>
<div class="t" style="left:586.6px;top:140.5px;font-size:23px;color:#e6e6e6;font-weight:700;">View Controller Scene</div>
<svg style="left:553px;top:188.1px" width="18" height="15"><path d="M0 0 H18 L9 15 Z" fill="#8c8c8e"/></svg>
<svg style="left:580px;top:179.6px" width="32" height="32"><circle cx="16.0" cy="16.0" r="14.5" fill="#4b3b0c" stroke="#f5b42a" stroke-width="2.6"/><rect x="8.0" y="8.0" width="16" height="16" fill="#fff"/></svg>
<div class="t" style="left:618.6px;top:183.7px;font-size:23.5px;color:#e6e6e6;font-weight:400;">View Controller</div>
<svg style="left:585px;top:224.1px" width="18" height="15"><path d="M0 0 H18 L9 15 Z" fill="#8c8c8e"/></svg>
<svg style="left:612px;top:215.6px" width="32" height="32"><rect x="1" y="1" width="30" height="30" fill="#39393b" stroke="#8e8e90" stroke-width="2"/><rect x="8" y="8" width="16" height="16" fill="#fff"/></svg>
<div class="t" style="left:650.6px;top:219.7px;font-size:23.5px;color:#e6e6e6;font-weight:400;">View</div>
<svg style="left:644px;top:251.60000000000002px" width="32" height="32"><rect x="1" y="1" width="30" height="30" fill="#39393b" stroke="#8e8e90" stroke-width="2"/><rect x="8" y="7" width="16" height="18" fill="#fff"/><rect x="10.5" y="9.5" width="11" height="13" fill="#000"/><rect x="12.5" y="11.5" width="7" height="9" fill="#fff"/><rect x="14.5" y="13.5" width="3" height="5" fill="#000"/></svg>
<div class="t" style="left:682.6px;top:255.7px;font-size:23.5px;color:#e6e6e6;font-weight:400;">Safe Area</div>
<svg style="left:617px;top:296.1px" width="18" height="15"><path d="M0 0 H18 L9 15 Z" fill="#8c8c8e"/></svg>
<svg style="left:644px;top:287.6px" width="32" height="32"><rect x="1" y="1" width="30" height="30" fill="#39393b" stroke="#8e8e90" stroke-width="2"/><rect x="8" y="8" width="16" height="16" fill="#fff"/></svg>
<div class="t" style="left:682.6px;top:291.7px;font-size:23.5px;color:#e6e6e6;font-weight:400;">Interactive View</div>
<svg style="left:651px;top:330.6px" width="15" height="18"><path d="M0 0 V18 L15 9 Z" fill="#8c8c8e"/></svg>
<svg style="left:678.5px;top:325.1px" width="29" height="29"><rect x="0.75" y="0.75" width="27.5" height="27.5" rx="5" fill="#0b0b0c" stroke="#555557" stroke-width="1.5"/><rect x="4" y="4" width="21" height="21" fill="none" stroke="#1e8af5" stroke-width="2"/><path d="M14.5 7 V12 M14.5 16 V21 M7 14.5 H12 M16 14.5 H21" stroke="#1e8af5" stroke-width="1.8"/></svg>
<div class="t" style="left:714.6px;top:327.7px;font-size:23.5px;color:#e6e6e6;font-weight:400;">Constraints</div>
<svg style="left:619px;top:366.6px" width="15" height="18"><path d="M0 0 V18 L15 9 Z" fill="#8c8c8e"/></svg>
<svg style="left:644px;top:359.6px" width="32" height="32"><rect x="1" y="1" width="30" height="30" fill="#000" stroke="#8e8e90" stroke-width="2"/><text x="16" y="24" font-family="Liberation Sans" font-weight="700" font-size="20" fill="#3e86f5" text-anchor="middle">B</text></svg>
<div class="t" style="left:682.6px;top:363.7px;font-size:23.5px;color:#e6e6e6;font-weight:400;">Button</div>
<svg style="left:644px;top:395.6px" width="32" height="32"><rect x="1" y="1" width="30" height="30" fill="#000" stroke="#8e8e90" stroke-width="2"/><text x="16" y="24" font-family="Liberation Sans" font-weight="700" font-size="20" fill="#fff" text-anchor="middle">L</text></svg>
<div class="t" style="left:682.6px;top:399.7px;font-size:23.5px;color:#e6e6e6;font-weight:400;letter-spacing:-0.35px;">Try to click the green view. I…</div>
<svg style="left:619px;top:438.6px" width="15" height="18"><path d="M0 0 V18 L15 9 Z" fill="#8c8c8e"/></svg>
<svg style="left:646.5px;top:433.1px" width="29" height="29"><rect x="0.75" y="0.75" width="27.5" height="27.5" rx="5" fill="#0b0b0c" stroke="#555557" stroke-width="1.5"/><rect x="4" y="4" width="21" height="21" fill="none" stroke="#1e8af5" stroke-width="2"/><path d="M14.5 7 V12 M14.5 16 V21 M7 14.5 H12 M16 14.5 H21" stroke="#1e8af5" stroke-width="1.8"/></svg>
<div class="t" style="left:682.6px;top:435.7px;font-size:23.5px;color:#e6e6e6;font-weight:400;">Constraints</div>
<svg style="left:612px;top:467.6px" width="32" height="32"><rect x="1" y="1" width="30" height="30" fill="#000" stroke="#8e8e90" stroke-width="2"/><path d="M19 9 L12 16 L19 23" stroke="#3e86f5" stroke-width="2.4" fill="none"/></svg>
<div class="t" style="left:650.6px;top:471.7px;font-size:23.5px;color:#e6e6e6;font-weight:400;">Navigation Item</div>
<svg style="left:581px;top:504.6px" width="30" height="32"><path d="M15 1.5 L28 8 V24 L15 30.5 L2 24 V8 Z" fill="#f09a2a"/><path d="M15 4 L25 9 L15 14 L5 9 Z" fill="#4a2a0a"/><path d="M6 12 L12 15 V26 L6 23 Z" fill="none" stroke="#4a2a0a" stroke-width="1.2"/><path d="M8 15 L10 16 V22 L8 21 Z" fill="none" stroke="#fff" stroke-width="1.2"/><text x="20.5" y="24" font-family="Liberation Sans" font-weight="700" font-size="11" fill="#fff" text-anchor="middle">1</text></svg>
<div class="t" style="left:618.6px;top:507.7px;font-size:23.5px;color:#e6e6e6;font-weight:400;">First Responder</div>
<svg style="left:580px;top:539.6px" width="32" height="32" viewBox="0 0 32 32"><rect x="1.5" y="1.5" width="29" height="29" fill="#5a330c" stroke="#f09a2a" stroke-width="3"/><path d="M20 8 H8 V24 H20 V19" stroke="#fff" stroke-width="2.4" fill="none"/><path d="M20 8 V12 M13 16 H25 M22 12.5 L25.5 16 L22 19.5" stroke="#fff" stroke-width="2.2" fill="none"/></svg>
<div class="t" style="left:618.6px;top:543.7px;font-size:23.5px;color:#e6e6e6;font-weight:400;">Exit</div>
<svg style="left:580px;top:577.6px" width="28" height="28"><circle cx="14" cy="14" r="12.8" fill="none" stroke="#7c7c7e" stroke-width="2"/><path d="M16.5 7.5 L10 14 L16.5 20.5" stroke="#8a8a8c" stroke-width="1.8" fill="none"/></svg>
<div class="t" style="left:614px;top:579.7px;font-size:23.5px;color:#e6e6e6;font-weight:400;letter-spacing:-0.35px;">Show segue to “Table View Contro…</div>
<svg style="left:520px;top:634px" width="18" height="15"><path d="M0 0 H18 L9 15 Z" fill="#8c8c8e"/></svg>
<svg style="left:550px;top:630px" width="28" height="28"><rect x="1" y="1" width="26" height="26" rx="5" fill="#f7b731"/><path d="M4 3 L7 3 L5 7 L2 7 Z M10 3 L13 3 L11 7 L8 7 Z M16 3 L19 3 L17 7 L14 7 Z M22 3 L25 3 L23 7 L20 7 Z" fill="#fff"/><rect x="3.5" y="9" width="21" height="16" rx="2" fill="#fff"/><path d="M6 13 H22 M6 17 H22 M6 21 H22" stroke="#3d2f08" stroke-width="1.8"/></svg>
<div class="t" style="left:586.6px;top:632.5px;font-size:23px;color:#e6e6e6;font-weight:700;">Table View Controller Scene</div>
<svg style="left:553px;top:680.5px" width="18" height="15"><path d="M0 0 H18 L9 15 Z" fill="#8c8c8e"/></svg>
<svg style="left:580px;top:672px" width="32" height="32"><circle cx="16.0" cy="16.0" r="14.5" fill="#4b3b0c" stroke="#f5b42a" stroke-width="2.6"/><path d="M9.0 10.0 H23.0 M9.0 14.0 H23.0 M9.0 18.0 H23.0 M9.0 22.0 H23.0" stroke="#fff" stroke-width="2"/></svg>
<div class="t" style="left:618.6px;top:676.1px;font-size:23.5px;color:#e6e6e6;font-weight:400;">Table View Controller</div>
<svg style="left:585px;top:716.5px" width="18" height="15"><path d="M0 0 H18 L9 15 Z" fill="#8c8c8e"/></svg>
<svg style="left:612px;top:708px" width="32" height="32"><rect x="1" y="1" width="30" height="30" fill="#39393b" stroke="#8e8e90" stroke-width="2"/><rect x="7" y="7" width="18" height="18" fill="#fff"/><path d="M7 11.5 H25 M7 16 H25 M7 20.5 H25" stroke="#39393b" stroke-width="1.5"/></svg>
<div class="t" style="left:650.6px;top:712.1px;font-size:23.5px;color:#e6e6e6;font-weight:400;">Table View</div>
<svg style="left:617px;top:752.5px" width="18" height="15"><path d="M0 0 H18 L9 15 Z" fill="#8c8c8e"/></svg>
<svg style="left:645px;top:744px" width="30" height="32"><path d="M15 2 L27 8.5 V23.5 L15 30 L3 23.5 V8.5 Z" fill="#0b2e6e" stroke="#1a8cff" stroke-width="2.6" stroke-linejoin="round"/><path d="M3 8.5 L15 15 L27 8.5 M15 15 V30" stroke="#1a8cff" stroke-width="2.4" fill="none"/></svg>
<div class="t" style="left:682.6px;top:748.1px;font-size:23.5px;color:#e6e6e6;font-weight:400;letter-spacing:0.35px;">Section-1</div>
<svg style="left:649px;top:788.5px" width="18" height="15"><path d="M0 0 H18 L9 15 Z" fill="#8c8c8e"/></svg>
<svg style="left:676px;top:780px" width="32" height="32"><rect x="1" y="1" width="30" height="30" fill="#39393b" stroke="#8e8e90" stroke-width="2"/><rect x="5" y="4" width="22" height="4" fill="#fff"/><rect x="5" y="10" width="22" height="4" fill="#a8a8aa"/><rect x="5" y="16" width="22" height="4" fill="#a8a8aa"/><rect x="5" y="22" width="22" height="4" fill="#a8a8aa"/></svg>
<div class="t" style="left:714.6px;top:784.1px;font-size:23.5px;color:#e6e6e6;font-weight:400;">Table View Cell</div>
<svg style="left:681px;top:824.5px" width="18" height="15"><path d="M0 0 H18 L9 15 Z" fill="#8c8c8e"/></svg>
<svg style="left:708px;top:816px" width="32" height="32"><rect x="1" y="1" width="30" height="30" fill="#39393b" stroke="#8e8e90" stroke-width="2"/><rect x="8" y="8" width="16" height="16" fill="#fff"/></svg>
<div class="t" style="left:746.6px;top:820.1px;font-size:23.5px;color:#e6e6e6;font-weight:400;">Content View</div>
<svg style="left:713px;top:860.5px" width="18" height="15"><path d="M0 0 H18 L9 15 Z" fill="#8c8c8e"/></svg>
<svg style="left:740px;top:852px" width="32" height="32"><rect x="1" y="1" width="30" height="30" fill="#39393b" stroke="#8e8e90" stroke-width="2"/><rect x="8" y="8" width="16" height="16" fill="#fff"/></svg>
<div class="t" style="left:778.6px;top:856.1px;font-size:23.5px;color:#e6e6e6;font-weight:400;">Interactive View</div>
<svg style="left:747px;top:895px" width="15" height="18"><path d="M0 0 V18 L15 9 Z" fill="#8c8c8e"/></svg>
<svg style="left:774.5px;top:889.5px" width="29" height="29"><rect x="0.75" y="0.75" width="27.5" height="27.5" rx="5" fill="#0b0b0c" stroke="#555557" stroke-width="1.5"/><rect x="4" y="4" width="21" height="21" fill="none" stroke="#1e8af5" stroke-width="2"/><path d="M14.5 7 V12 M14.5 16 V21 M7 14.5 H12 M16 14.5 H21" stroke="#1e8af5" stroke-width="1.8"/></svg>
<div class="t" style="left:810.6px;top:892.1px;font-size:23.5px;color:#e6e6e6;font-weight:400;">Constraints</div>
<svg style="left:715px;top:931px" width="15" height="18"><path d="M0 0 V18 L15 9 Z" fill="#8c8c8e"/></svg>
<svg style="left:742.5px;top:925.5px" width="29" height="29"><rect x="0.75" y="0.75" width="27.5" height="27.5" rx="5" fill="#0b0b0c" stroke="#555557" stroke-width="1.5"/><rect x="4" y="4" width="21" height="21" fill="none" stroke="#1e8af5" stroke-width="2"/><path d="M14.5 7 V12 M14.5 16 V21 M7 14.5 H12 M16 14.5 H21" stroke="#1e8af5" stroke-width="1.8"/></svg>
<div class="t" style="left:778.6px;top:928.1px;font-size:23.5px;color:#e6e6e6;font-weight:400;">Constraints</div>
<svg style="left:619px;top:967px" width="15" height="18"><path d="M0 0 V18 L15 9 Z" fill="#8c8c8e"/></svg>
<svg style="left:645px;top:960px" width="30" height="32"><path d="M15 2 L27 8.5 V23.5 L15 30 L3 23.5 V8.5 Z" fill="#0b2e6e" stroke="#1a8cff" stroke-width="2.6" stroke-linejoin="round"/><path d="M3 8.5 L15 15 L27 8.5 M15 15 V30" stroke="#1a8cff" stroke-width="2.4" fill="none"/></svg>
<div class="t" style="left:682.6px;top:964.1px;font-size:23.5px;color:#e6e6e6;font-weight:400;letter-spacing:0.35px;">Section-2</div>
<svg style="left:619px;top:1003px" width="15" height="18"><path d="M0 0 V18 L15 9 Z" fill="#8c8c8e"/></svg>
<svg style="left:645px;top:996px" width="30" height="32"><path d="M15 2 L27 8.5 V23.5 L15 30 L3 23.5 V8.5 Z" fill="#0b2e6e" stroke="#1a8cff" stroke-width="2.6" stroke-linejoin="round"/><path d="M3 8.5 L15 15 L27 8.5 M15 15 V30" stroke="#1a8cff" stroke-width="2.4" fill="none"/></svg>
<div class="t" style="left:682.6px;top:1000.1px;font-size:23.5px;color:#e6e6e6;font-weight:400;letter-spacing:0.35px;">Section-3</div>
<svg style="left:619px;top:1039px" width="15" height="18"><path d="M0 0 V18 L15 9 Z" fill="#8c8c8e"/></svg>
<svg style="left:645px;top:1032px" width="30" height="32"><path d="M15 2 L27 8.5 V23.5 L15 30 L3 23.5 V8.5 Z" fill="#0b2e6e" stroke="#1a8cff" stroke-width="2.6" stroke-linejoin="round"/><path d="M3 8.5 L15 15 L27 8.5 M15 15 V30" stroke="#1a8cff" stroke-width="2.4" fill="none"/></svg>
<div class="t" style="left:682.6px;top:1036.1px;font-size:23.5px;color:#e6e6e6;font-weight:400;letter-spacing:0.35px;">Section-4</div>
<svg style="left:619px;top:1075px" width="15" height="18"><path d="M0 0 V18 L15 9 Z" fill="#8c8c8e"/></svg>
<svg style="left:645px;top:1068px" width="30" height="32"><path d="M15 2 L27 8.5 V23.5 L15 30 L3 23.5 V8.5 Z" fill="#0b2e6e" stroke="#1a8cff" stroke-width="2.6" stroke-linejoin="round"/><path d="M3 8.5 L15 15 L27 8.5 M15 15 V30" stroke="#1a8cff" stroke-width="2.4" fill="none"/></svg>
<div class="t" style="left:682.6px;top:1072.1px;font-size:23.5px;color:#e6e6e6;font-weight:400;letter-spacing:0.35px;">Section-5</div>
<svg style="left:619px;top:1111px" width="15" height="18"><path d="M0 0 V18 L15 9 Z" fill="#8c8c8e"/></svg>
<svg style="left:645px;top:1104px" width="30" height="32"><path d="M15 2 L27 8.5 V23.5 L15 30 L3 23.5 V8.5 Z" fill="#0b2e6e" stroke="#1a8cff" stroke-width="2.6" stroke-linejoin="round"/><path d="M3 8.5 L15 15 L27 8.5 M15 15 V30" stroke="#1a8cff" stroke-width="2.4" fill="none"/></svg>
<div class="t" style="left:682.6px;top:1108.1px;font-size:23.5px;color:#e6e6e6;font-weight:400;letter-spacing:0.35px;">Section-6</div>
<svg style="left:619px;top:1147px" width="15" height="18"><path d="M0 0 V18 L15 9 Z" fill="#8c8c8e"/></svg>
<svg style="left:645px;top:1140px" width="30" height="32"><path d="M15 2 L27 8.5 V23.5 L15 30 L3 23.5 V8.5 Z" fill="#0b2e6e" stroke="#1a8cff" stroke-width="2.6" stroke-linejoin="round"/><path d="M3 8.5 L15 15 L27 8.5 M15 15 V30" stroke="#1a8cff" stroke-width="2.4" fill="none"/></svg>
<div class="t" style="left:682.6px;top:1144.1px;font-size:23.5px;color:#e6e6e6;font-weight:400;letter-spacing:0.35px;">Section-7</div>
<svg style="left:619px;top:1183px" width="15" height="18"><path d="M0 0 V18 L15 9 Z" fill="#8c8c8e"/></svg>
<svg style="left:645px;top:1176px" width="30" height="32"><path d="M15 2 L27 8.5 V23.5 L15 30 L3 23.5 V8.5 Z" fill="#0b2e6e" stroke="#1a8cff" stroke-width="2.6" stroke-linejoin="round"/><path d="M3 8.5 L15 15 L27 8.5 M15 15 V30" stroke="#1a8cff" stroke-width="2.4" fill="none"/></svg>
<div class="t" style="left:682.6px;top:1180.1px;font-size:23.5px;color:#e6e6e6;font-weight:400;letter-spacing:0.35px;">Section-8</div>
<svg style="left:619px;top:1219px" width="15" height="18"><path d="M0 0 V18 L15 9 Z" fill="#8c8c8e"/></svg>
<svg style="left:645px;top:1212px" width="30" height="32"><path d="M15 2 L27 8.5 V23.5 L15 30 L3 23.5 V8.5 Z" fill="#0b2e6e" stroke="#1a8cff" stroke-width="2.6" stroke-linejoin="round"/><path d="M3 8.5 L15 15 L27 8.5 M15 15 V30" stroke="#1a8cff" stroke-width="2.4" fill="none"/></svg>
<div class="t" style="left:682.6px;top:1216.1px;font-size:23.5px;color:#e6e6e6;font-weight:400;letter-spacing:0.35px;">Section-9</div>
<svg style="left:619px;top:1255px" width="15" height="18"><path d="M0 0 V18 L15 9 Z" fill="#8c8c8e"/></svg>
<svg style="left:645px;top:1248px" width="30" height="32"><path d="M15 2 L27 8.5 V23.5 L15 30 L3 23.5 V8.5 Z" fill="#0b2e6e" stroke="#1a8cff" stroke-width="2.6" stroke-linejoin="round"/><path d="M3 8.5 L15 15 L27 8.5 M15 15 V30" stroke="#1a8cff" stroke-width="2.4" fill="none"/></svg>
<div class="t" style="left:682.6px;top:1252.1px;font-size:23.5px;color:#e6e6e6;font-weight:400;letter-spacing:0.35px;">Section-10</div>
<svg style="left:619px;top:1291px" width="15" height="18"><path d="M0 0 V18 L15 9 Z" fill="#8c8c8e"/></svg>
<svg style="left:645px;top:1284px" width="30" height="32"><path d="M15 2 L27 8.5 V23.5 L15 30 L3 23.5 V8.5 Z" fill="#0b2e6e" stroke="#1a8cff" stroke-width="2.6" stroke-linejoin="round"/><path d="M3 8.5 L15 15 L27 8.5 M15 15 V30" stroke="#1a8cff" stroke-width="2.4" fill="none"/></svg>
<div class="t" style="left:682.6px;top:1288.1px;font-size:23.5px;color:#e6e6e6;font-weight:400;letter-spacing:0.35px;">Section-11</div>
<svg style="left:619px;top:1327px" width="15" height="18"><path d="M0 0 V18 L15 9 Z" fill="#8c8c8e"/></svg>
<svg style="left:645px;top:1320px" width="30" height="32"><path d="M15 2 L27 8.5 V23.5 L15 30 L3 23.5 V8.5 Z" fill="#0b2e6e" stroke="#1a8cff" stroke-width="2.6" stroke-linejoin="round"/><path d="M3 8.5 L15 15 L27 8.5 M15 15 V30" stroke="#1a8cff" stroke-width="2.4" fill="none"/></svg>
<div class="t" style="left:682.6px;top:1324.1px;font-size:23.5px;color:#e6e6e6;font-weight:400;letter-spacing:0.35px;">Section-12</div>
<svg style="left:619px;top:1363px" width="15" height="18"><path d="M0 0 V18 L15 9 Z" fill="#8c8c8e"/></svg>
<svg style="left:645px;top:1356px" width="30" height="32"><path d="M15 2 L27 8.5 V23.5 L15 30 L3 23.5 V8.5 Z" fill="#0b2e6e" stroke="#1a8cff" stroke-width="2.6" stroke-linejoin="round"/><path d="M3 8.5 L15 15 L27 8.5 M15 15 V30" stroke="#1a8cff" stroke-width="2.4" fill="none"/></svg>
<div class="t" style="left:682.6px;top:1360.1px;font-size:23.5px;color:#e6e6e6;font-weight:400;letter-spacing:0.35px;">Section-13</div>
<svg style="left:619px;top:1399px" width="15" height="18"><path d="M0 0 V18 L15 9 Z" fill="#8c8c8e"/></svg>
<svg style="left:645px;top:1392px" width="30" height="32"><path d="M15 2 L27 8.5 V23.5 L15 30 L3 23.5 V8.5 Z" fill="#0b2e6e" stroke="#1a8cff" stroke-width="2.6" stroke-linejoin="round"/><path d="M3 8.5 L15 15 L27 8.5 M15 15 V30" stroke="#1a8cff" stroke-width="2.4" fill="none"/></svg>
<div class="t" style="left:682.6px;top:1396.1px;font-size:23.5px;color:#e6e6e6;font-weight:400;letter-spacing:0.35px;">Section-14</div>
<svg style="left:619px;top:1435px" width="15" height="18"><path d="M0 0 V18 L15 9 Z" fill="#8c8c8e"/></svg>
<svg style="left:645px;top:1428px" width="30" height="32"><path d="M15 2 L27 8.5 V23.5 L15 30 L3 23.5 V8.5 Z" fill="#0b2e6e" stroke="#1a8cff" stroke-width="2.6" stroke-linejoin="round"/><path d="M3 8.5 L15 15 L27 8.5 M15 15 V30" stroke="#1a8cff" stroke-width="2.4" fill="none"/></svg>
<div class="t" style="left:682.6px;top:1432.1px;font-size:23.5px;color:#e6e6e6;font-weight:400;letter-spacing:0.35px;">Section-15</div>
<svg style="left:619px;top:1471px" width="15" height="18"><path d="M0 0 V18 L15 9 Z" fill="#8c8c8e"/></svg>
<svg style="left:645px;top:1464px" width="30" height="32"><path d="M15 2 L27 8.5 V23.5 L15 30 L3 23.5 V8.5 Z" fill="#0b2e6e" stroke="#1a8cff" stroke-width="2.6" stroke-linejoin="round"/><path d="M3 8.5 L15 15 L27 8.5 M15 15 V30" stroke="#1a8cff" stroke-width="2.4" fill="none"/></svg>
<div class="t" style="left:682.6px;top:1468.1px;font-size:23.5px;color:#e6e6e6;font-weight:400;letter-spacing:0.35px;">Section-16</div>
<svg style="left:619px;top:1507px" width="15" height="18"><path d="M0 0 V18 L15 9 Z" fill="#8c8c8e"/></svg>
<svg style="left:645px;top:1500px" width="30" height="32"><path d="M15 2 L27 8.5 V23.5 L15 30 L3 23.5 V8.5 Z" fill="#0b2e6e" stroke="#1a8cff" stroke-width="2.6" stroke-linejoin="round"/><path d="M3 8.5 L15 15 L27 8.5 M15 15 V30" stroke="#1a8cff" stroke-width="2.4" fill="none"/></svg>
<div class="t" style="left:682.6px;top:1504.1px;font-size:23.5px;color:#e6e6e6;font-weight:400;letter-spacing:0.35px;">Section-17</div>
<svg style="left:612px;top:1536px" width="32" height="32"><rect x="1" y="1" width="30" height="30" fill="#000" stroke="#8e8e90" stroke-width="2"/><path d="M19 9 L12 16 L19 23" stroke="#3e86f5" stroke-width="2.4" fill="none"/></svg>
<div class="t" style="left:650.6px;top:1540.1px;font-size:23.5px;color:#e6e6e6;font-weight:400;">Navigation Item</div>
<svg style="left:581px;top:1573px" width="30" height="32"><path d="M15 1.5 L28 8 V24 L15 30.5 L2 24 V8 Z" fill="#f09a2a"/><path d="M15 4 L25 9 L15 14 L5 9 Z" fill="#4a2a0a"/><path d="M6 12 L12 15 V26 L6 23 Z" fill="none" stroke="#4a2a0a" stroke-width="1.2"/><path d="M8 15 L10 16 V22 L8 21 Z" fill="none" stroke="#fff" stroke-width="1.2"/><text x="20.5" y="24" font-family="Liberation Sans" font-weight="700" font-size="11" fill="#fff" text-anchor="middle">1</text></svg>
<div class="t" style="left:618.6px;top:1576.1px;font-size:23.5px;color:#e6e6e6;font-weight:400;">First Responder</div>
<svg style="left:580px;top:1608px" width="32" height="32" viewBox="0 0 32 32"><rect x="1.5" y="1.5" width="29" height="29" fill="#5a330c" stroke="#f09a2a" stroke-width="3"/><path d="M20 8 H8 V24 H20 V19" stroke="#fff" stroke-width="2.4" fill="none"/><path d="M20 8 V12 M13 16 H25 M22 12.5 L25.5 16 L22 19.5" stroke="#fff" stroke-width="2.2" fill="none"/></svg>
<div class="t" style="left:618.6px;top:1612.1px;font-size:23.5px;color:#e6e6e6;font-weight:400;">Exit</div>
<svg style="left:521px;top:1664px" width="15" height="18"><path d="M0 0 V18 L15 9 Z" fill="#8c8c8e"/></svg>
<svg style="left:550px;top:1662px" width="28" height="28"><rect x="1" y="1" width="26" height="26" rx="5" fill="#f7b731"/><path d="M4 3 L7 3 L5 7 L2 7 Z M10 3 L13 3 L11 7 L8 7 Z M16 3 L19 3 L17 7 L14 7 Z M22 3 L25 3 L23 7 L20 7 Z" fill="#fff"/><rect x="3.5" y="9" width="21" height="16" rx="2" fill="#3d2f08"/><path d="M6 19 L10 14 H22 V23 H10 Z" fill="#fff"/></svg>
<div class="t" style="left:586.6px;top:1664.5px;font-size:23px;color:#e6e6e6;font-weight:700;">Navigation Controller Scene</div>
<div class="a" style="left:526px;top:618px;width:498px;height:2px;background:#565658"></div>
<div class="a" style="left:526px;top:1650px;width:498px;height:2px;background:#565658"></div>
<div class="a" style="left:516px;top:1841px;width:516px;height:60px;border-radius:9px;background:#2a2a2c;border:1.5px solid #4a4a4c"></div>
<svg style="left:526px;top:1850px" width="28" height="28"><circle cx="14" cy="14" r="12.5" fill="none" stroke="#8e8e90" stroke-width="2"/><path d="M8 10 H20 M10 14 H18 M12 18 H16" stroke="#8e8e90" stroke-width="2"/></svg>
<div class="t" style="left:560px;top:1849.7px;font-size:24px;color:#7e7e80;font-weight:400;">Filter</div><!-- CANVAS -->
<div class="a" style="left:1046px;top:126px;width:1794px;height:1706px;background:#404040;overflow:hidden">
<div class="a" style="left:73px;top:91px;width:717px;height:54px;background:#262626;border:1.5px solid #5c5c5e;border-radius:7px"></div>
<div class="a" style="left:1018px;top:92px;width:718px;height:53px;background:#262626;border:1.5px solid #5c5c5e;border-radius:7px"></div>
<div class="t" style="left:1267px;top:107.5px;font-size:21.8px;color:#bdbdbd;font-weight:700;">Table View Controller</div>
<svg style="left:353px;top:102px" width="32" height="32"><circle cx="16" cy="16" r="14.5" fill="#4b3b0c" stroke="#f5b42a" stroke-width="2.6"/><rect x="8" y="8" width="16" height="16" fill="#fff"/></svg>
<svg style="left:418px;top:102px" width="30" height="32"><path d="M15 1.5 L28 8 V24 L15 30.5 L2 24 V8 Z" fill="#f09a2a"/><path d="M15 4 L25 9 L15 14 L5 9 Z" fill="#4a2a0a"/><path d="M6 12 L12 15 V26 L6 23 Z" fill="none" stroke="#4a2a0a" stroke-width="1.2"/><path d="M8 15 L10 16 V22 L8 21 Z" fill="none" stroke="#fff" stroke-width="1.2"/><text x="20.5" y="24" font-family="Liberation Sans" font-weight="700" font-size="11" fill="#fff" text-anchor="middle">1</text></svg>
<svg style="left:481px;top:102px" width="32" height="32"><rect x="1.5" y="1.5" width="29" height="29" fill="#5a330c" stroke="#f09a2a" stroke-width="3"/><path d="M20 8 H8 V24 H20 V19" stroke="#fff" stroke-width="2.4" fill="none"/><path d="M20 8 V12 M13 16 H25 M22 12.5 L25.5 16 L22 19.5" stroke="#fff" stroke-width="2.2" fill="none"/></svg>
<svg style="left:0px;top:894px" width="80" height="90"><path d="M0 43.6 H66 M38.9 16.2 L66.5 43.6 L38.9 71" stroke="#6a6a6a" stroke-width="5" fill="none"/></svg>
<svg style="left:788px;top:894px" width="240" height="90"><path d="M0 43.7 H91 M141 43.7 H224 M197.2 16.3 L224.8 43.7 L197.2 71" stroke="#6a6a6a" stroke-width="5" fill="none"/><circle cx="116.2" cy="44.3" r="23.5" fill="none" stroke="#6a6a6a" stroke-width="3.5"/><rect x="104.5" y="33" width="23.5" height="23" fill="none" stroke="#6a6a6a" stroke-width="3.2"/><path d="M118 33 V40 M118 48 V56 M108 44 H125 M113 39 L108 44 L113 49" stroke="#6a6a6a" stroke-width="3" fill="none"/></svg>
<div class="a" style="left:74px;top:165px;width:715px;height:1545px;background:#fff;border:2px solid #000;border-radius:88px;overflow:hidden">
<div class="a" style="left:0px;top:0px;width:711px;height:151px;background:linear-gradient(90deg,#f4f4f4 0%,#f8f8f8 12%,#fdfdfd 30%,#ffffff 50%,#fdfdfd 70%,#f8f8f8 88%,#f4f4f4 100%)"></div>
<div class="a" style="left:0px;top:150px;width:711px;height:2px;background:#c4c4c4"></div>
<div class="a" style="left:149px;top:316px;width:413px;height:219px;background:#35c759"></div>
<div class="t" style="left:74px;top:755.5px;font-size:29px;color:#000;font-weight:400;letter-spacing:0.3px">Try to click the green view. Its not a button.</div>
<div class="t" style="left:316px;top:1380.0px;font-size:26px;color:#1a82fb;font-weight:400;">Button</div>
<div class="a" style="left:229px;top:1519px;width:253px;height:9px;background:#4a4a4a;border-radius:5px"></div>
</div>
<svg style="left:223px;top:165px" width="418" height="60"><path d="M0 0 Q9 0 9 9 V14 C9 44 22 58 53 58 H363 C394 58 407 44 407 14 V9 Q407 0 416 0 Z" fill="#000"/></svg>
<div class="a" style="left:428.5px;top:167px;width:2px;height:1540px;background:#3c7ec2"></div>
<div class="a" style="left:76px;top:594.5px;width:711px;height:2px;background:#3c7ec2"></div>
<svg style="left:614px;top:474px" width="60" height="240"><path d="M35.5 10 V228.5 M28 10 H43 M28 228.5 H43" stroke="#3d80c4" stroke-width="2.2" fill="none"/></svg>
<svg style="left:216px;top:704px" width="430" height="30"><path d="M10 15.5 H420 M10 9 V22 M420 9 V22" stroke="#3d80c4" stroke-width="2.2" fill="none"/></svg>
<div class="a" style="left:219.5px;top:476.5px;width:13px;height:13px;background:#fff;border:2px solid #333"></div>
<div class="a" style="left:219.5px;top:588.5px;width:13px;height:13px;background:#fff;border:2px solid #333"></div>
<div class="a" style="left:219.5px;top:695.5px;width:13px;height:13px;background:#fff;border:2px solid #333"></div>
<div class="a" style="left:422.5px;top:476.5px;width:13px;height:13px;background:#fff;border:2px solid #333"></div>
<div class="a" style="left:422.5px;top:695.5px;width:13px;height:13px;background:#fff;border:2px solid #333"></div>
<div class="a" style="left:630.5px;top:476.5px;width:13px;height:13px;background:#fff;border:2px solid #333"></div>
<div class="a" style="left:630.5px;top:588.5px;width:13px;height:13px;background:#fff;border:2px solid #333"></div>
<div class="a" style="left:630.5px;top:695.5px;width:13px;height:13px;background:#fff;border:2px solid #333"></div>
<div class="a" style="left:1020px;top:165px;width:715px;height:1545px;background:#fff;border:2px solid #000;border-radius:88px;overflow:hidden">
<div class="a" style="left:0px;top:0px;width:711px;height:151px;background:linear-gradient(90deg,#f4f4f4 0%,#f8f8f8 12%,#fdfdfd 30%,#ffffff 50%,#fdfdfd 70%,#f8f8f8 88%,#f4f4f4 100%)"></div>
<div class="a" style="left:0px;top:150px;width:711px;height:2px;background:#b0b0b0"></div>
<svg style="left:19px;top:94px" width="26" height="40"><path d="M21 3 L5 19 L21 35" stroke="#1a82fb" stroke-width="4" stroke-linecap="round" stroke-linejoin="round" fill="none"/></svg>
<div class="t" style="left:52px;top:99.8px;font-size:28px;color:#1a82fb;font-weight:400;">Back</div>
<div class="a" style="left:0px;top:152px;width:711px;height:47px;background:#e5e5e5"></div>
<div class="t" style="left:35px;top:162.1px;font-size:28.2px;color:#2a2a2a;font-weight:700;-webkit-text-stroke:0">Section-1</div>
<div class="a" style="left:149px;top:225px;width:413px;height:219px;background:#35c759"></div>
<div class="a" style="left:0px;top:471px;width:711px;height:95px;background:#e5e5e5"></div>
<div class="t" style="left:35px;top:529.1px;font-size:28.2px;color:#2a2a2a;font-weight:700;-webkit-text-stroke:0">Section-2</div>
<div class="a" style="left:149px;top:592px;width:413px;height:219px;background:#35c759"></div>
<div class="a" style="left:0px;top:838.7px;width:711px;height:95px;background:#e5e5e5"></div>
<div class="t" style="left:35px;top:896.8px;font-size:28.2px;color:#2a2a2a;font-weight:700;-webkit-text-stroke:0">Section-3</div>
<div class="a" style="left:149px;top:959.7px;width:413px;height:219px;background:#35c759"></div>
<div class="a" style="left:0px;top:1206.4px;width:711px;height:95px;background:#e5e5e5"></div>
<div class="t" style="left:35px;top:1264.5px;font-size:28.2px;color:#2a2a2a;font-weight:700;-webkit-text-stroke:0">Section-4</div>
<div class="a" style="left:149px;top:1327.4px;width:413px;height:219px;background:#35c759"></div>
<div class="a" style="left:0px;top:1433.5px;width:711px;height:47.5px;background:#e5e5e5"></div>
<div class="a" style="left:149px;top:1481px;width:413px;height:80px;background:#35c759"></div>
<div class="a" style="left:228px;top:1519px;width:254px;height:9px;background:#4a4a4a;border-radius:5px"></div>
</div>
<svg style="left:1170px;top:165px" width="417" height="60"><path d="M0 0 Q9 0 9 9 V14 C9 44 22 58 53 58 H362 C393 58 406 44 406 14 V9 Q406 0 415 0 Z" fill="#000"/></svg>
</div>
<div class="a" style="left:1046px;top:1832px;width:1794px;height:52px;background:#3d3d3f"></div>
<svg style="left:1064px;top:1851px" width="29" height="25"><rect x="1" y="1" width="27" height="23" fill="none" stroke="#a0a0a2" stroke-width="2"/><rect x="5" y="5" width="4" height="15" fill="#a0a0a2"/></svg>
<div class="t" style="left:1129px;top:1849.0px;font-size:26px;color:#ececec;font-weight:400;">View as: iPhone 11 (<span style="color:#8e8e90;font-size:17px;margin-left:2px;margin-right:3px">w</span>C <span style="color:#8e8e90;font-size:17px;margin-left:8px;margin-right:2px">h</span>R)</div>
<div class="a" style="left:1845px;top:1860px;width:26px;height:2px;background:#b0b0b2"></div>
<div class="t" style="left:1914px;top:1849.0px;font-size:26px;color:#dcdcdc;font-weight:400;">86%</div>
<svg style="left:2012px;top:1848px" width="28" height="28"><path d="M14 1 V27 M1 14 H27" stroke="#c8c8ca" stroke-width="2"/></svg>
<svg style="left:2570px;top:1847px" width="36" height="32"><path d="M3 9 V3 H9 M25 3 H31 V9 M31 23 V29 H25 M9 29 H3 V23" stroke="#c0c0c2" stroke-width="1.9" fill="none"/><path d="M11 17 A8.5 8.5 0 1 1 18 22.5 H8 M12 18.5 L8 22.5 L12 26.5" stroke="#c0c0c2" stroke-width="1.9" fill="none"/></svg>
<svg style="left:2622px;top:1849px" width="34" height="28"><path d="M2.5 2 V26 M7.5 2.5 H19 V11 H7.5 Z M7.5 15 H31 V24.5 H7.5 Z" stroke="#c0c0c2" stroke-width="1.9" fill="none"/></svg>
<svg style="left:2674px;top:1849px" width="34" height="28"><path d="M3 2 V26 M31 2 V26 M3 14 H10 M24 14 H31 M10.5 7 H24 V20 H10.5 Z" stroke="#c0c0c2" stroke-width="1.9" fill="none"/></svg>
<svg style="left:2726px;top:1849px" width="34" height="28"><path d="M3 2 V26 M31 2 V26 M3 14 H8 M26 14 H31 M17 6.5 L24.5 20 H9.5 Z" stroke="#c0c0c2" stroke-width="1.9" fill="none"/></svg>
<svg style="left:2789px;top:1847px" width="33" height="30"><path d="M11 4 H2 V26 H31 V4 H22 M16.5 1 V18.5 M10 12 L16.5 18.5 L23 12" stroke="#c0c0c2" stroke-width="1.9" fill="none"/></svg><!-- INSPECTOR -->
<div class="a" style="left:2840px;top:68px;width:2px;height:1816px;background:#050505"></div>
<div class="a" style="left:2842px;top:68px;width:518px;height:1816px;background:#3c3c3f"></div>
<div class="a" style="left:2842px;top:124px;width:518px;height:2px;background:#545457"></div>
<svg style="left:2910px;top:85px" width="22" height="26"><path d="M1 1 H13 L21 9 V25 H1 Z M13 1 V9 H21" fill="none" stroke="#b4b4b6" stroke-width="2"/></svg>
<svg style="left:2967px;top:85px" width="27" height="27"><circle cx="13.5" cy="13.5" r="12.3" fill="none" stroke="#b4b4b6" stroke-width="2"/><path d="M13.5 2 V13.5 L8 19" fill="none" stroke="#b4b4b6" stroke-width="1.6"/></svg>
<svg style="left:3027px;top:85px" width="27" height="27"><circle cx="13.5" cy="13.5" r="12.3" fill="none" stroke="#b4b4b6" stroke-width="2"/><path d="M9 10.5 Q9 6 13.5 6 Q18 6 18 10 Q18 12.5 15 14 Q13.5 15 13.5 17.5" fill="none" stroke="#b4b4b6" stroke-width="2"/><rect x="12.3" y="19.5" width="2.4" height="2.6" fill="#b4b4b6"/></svg>
<svg style="left:3085px;top:85px" width="30" height="26"><rect x="0" y="0" width="30" height="26" fill="#1a84ff"/><rect x="4" y="4" width="22" height="18" fill="none" stroke="#2a2a2c" stroke-width="2"/><rect x="7" y="7" width="7" height="7" fill="none" stroke="#2a2a2c" stroke-width="1.6"/><path d="M16.5 8 H23 M16.5 11 H23 M16.5 14 H23 M7 18 H23" stroke="#2a2a2c" stroke-width="1.6"/></svg>
<svg style="left:3147px;top:85px" width="27" height="27"><path d="M6.5 1 H20.5 V8 H25 V14 H20.5 V18 L13.5 25 L6.5 18 V14 H2 V8 H6.5 Z" fill="none" stroke="#b4b4b6" stroke-width="2" stroke-linejoin="miter"/></svg>
<svg style="left:3212px;top:85px" width="16" height="26"><rect x="1" y="1" width="13" height="24" fill="none" stroke="#b4b4b6" stroke-width="2"/><path d="M8 6 H14 M10 10 H14 M8 14 H14 M10 18 H14 M8 22 H14" stroke="#b4b4b6" stroke-width="1.6"/></svg>
<svg style="left:3267px;top:85px" width="27" height="27"><circle cx="13.5" cy="13.5" r="12.3" fill="none" stroke="#b4b4b6" stroke-width="2"/><path d="M6 13.5 H20 M14.5 8 L20 13.5 L14.5 19" fill="none" stroke="#b4b4b6" stroke-width="2"/></svg>
<div class="t" style="left:2850.6px;top:134.2px;font-size:20.8px;color:#e6e6e6;font-weight:700;">Custom Class</div>
<div class="t" style="left:2599px;width:400px;text-align:right;top:181.8px;font-size:21.2px;color:#e4e4e4;font-weight:400">Class</div>
<div class="a" style="left:3010px;top:173px;width:306px;height:32px;background:#47474a;border-top:1px solid #3d3d40;border-bottom:2px solid #626265"></div>
<div class="t" style="left:3016.8px;top:177.8px;font-size:23.5px;color:#ececec;font-weight:400;">InteractiveView</div>
<svg style="left:3286px;top:178.6px" width="21" height="21"><circle cx="10.5" cy="10.5" r="10" fill="#8e8e90"/><path d="M5 8.5 H10.5 V5 L16 10.5 L10.5 16 V12.5 H5 Z" fill="#47474a"/></svg>
<div class="a" style="left:3316px;top:173px;width:30px;height:32px;background:linear-gradient(#2b79ec,#1c62d3);border-radius:0 5px 5px 0"></div><svg style="left:3324px;top:184.0px" width="15" height="10"><path d="M1.5 1.5 L7.5 7.5 L13.5 1.5" stroke="#fff" stroke-width="2.2" fill="none"/></svg>
<div class="t" style="left:2599px;width:400px;text-align:right;top:225.7px;font-size:21.2px;color:#e4e4e4;font-weight:400">Module</div>
<div class="a" style="left:3010px;top:217px;width:306px;height:32px;background:#47474a;border-top:1px solid #3d3d40;border-bottom:2px solid #626265"></div>
<div class="t" style="left:3016.8px;top:221.8px;font-size:23.5px;color:#77777a;font-weight:400;">InteractiveUI</div>
<div class="a" style="left:3316px;top:217px;width:30px;height:32px;background:linear-gradient(#2b79ec,#1c62d3);border-radius:0 5px 5px 0"></div><svg style="left:3324px;top:228.0px" width="15" height="10"><path d="M1.5 1.5 L7.5 7.5 L13.5 1.5" stroke="#fff" stroke-width="2.2" fill="none"/></svg>
<div class="a" style="left:3010px;top:264px;width:24px;height:24px;background:linear-gradient(#2b79ec,#1c62d3);border-radius:5px"></div><svg style="left:3014px;top:269px" width="17" height="15"><path d="M2 7.5 L6.5 12 L15 2.5" stroke="#fff" stroke-width="2.6" fill="none"/></svg>
<div class="t" style="left:3044.7px;top:263.8px;font-size:23.5px;color:#e4e4e4;font-weight:400;">Inherit Module From Target</div>
<div class="a" style="left:2842px;top:324px;width:518px;height:2px;background:#4e4e51"></div>
<div class="t" style="left:2850.6px;top:334.4px;font-size:20.8px;color:#e6e6e6;font-weight:700;">Identity</div>
<div class="t" style="left:2599px;width:400px;text-align:right;top:381.6px;font-size:21.2px;color:#e4e4e4;font-weight:400">Restoration ID</div>
<div class="a" style="left:3009px;top:373px;width:336px;height:35px;background:#47474a;border-top:1px solid #3d3d40;border-bottom:2px solid #626265"></div>
<div class="a" style="left:2842px;top:440px;width:518px;height:2px;background:#4e4e51"></div>
<div class="t" style="left:2850.6px;top:450.4px;font-size:20.8px;color:#e6e6e6;font-weight:700;">User Defined Runtime Attributes</div>
<div class="a" style="left:2842px;top:478px;width:518px;height:2px;background:#4e4e51"></div>
<div class="t" style="left:2848.7px;top:491.2px;font-size:22.2px;color:#ececec;font-weight:400;">Key Path</div>
<div class="t" style="left:2984.5px;top:491.2px;font-size:22.2px;color:#ececec;font-weight:400;">Type</div>
<div class="t" style="left:3120px;top:491.2px;font-size:22.2px;color:#ececec;font-weight:400;">Value</div>
<div class="a" style="left:2975px;top:486px;width:1.5px;height:36px;background:#59595c"></div>
<div class="a" style="left:3111px;top:486px;width:1.5px;height:36px;background:#59595c"></div>
<div class="a" style="left:2842px;top:526px;width:518px;height:2px;background:#4e4e51"></div>
<div class="a" style="left:2842px;top:528px;width:518px;height:101.5px;background:#2c2c2e"></div>
<div class="a" style="left:2842px;top:629px;width:518px;height:35px;background:#1e1e1f"></div>
<svg style="left:2849px;top:637px" width="23" height="23"><path d="M11.5 0 V23 M0 11.5 H23" stroke="#f0f0f0" stroke-width="2"/></svg>
<div class="a" style="left:2890px;top:647px;width:22px;height:2px;background:#5a5a5c"></div>
<div class="a" style="left:2842px;top:663px;width:518px;height:2px;background:#4e4e51"></div>
<div class="t" style="left:2850.6px;top:673.9px;font-size:20.8px;color:#e6e6e6;font-weight:700;">Document</div>
<div class="t" style="left:2599px;width:400px;text-align:right;top:722.1px;font-size:21.2px;color:#e4e4e4;font-weight:400">Label</div>
<div class="a" style="left:3009px;top:714px;width:336px;height:35px;background:#47474a;border-top:1px solid #3d3d40;border-bottom:2px solid #626265"></div>
<div class="t" style="left:3016px;top:719.1px;font-size:23.5px;color:#77777a;font-weight:400;">Xcode Specific Label</div>
<svg style="left:3015px;top:767px" width="15" height="15"><path d="M1.5 1.5 L13.5 13.5 M13.5 1.5 L1.5 13.5" stroke="#6e6e70" stroke-width="2"/></svg>
<div class="a" style="left:3045.0px;top:766px;width:17px;height:17px;background:#f08e8a;box-shadow:0 1px 1px rgba(0,0,0,0.3)"></div>
<div class="a" style="left:3081.1px;top:766px;width:17px;height:17px;background:#f5bb7c;box-shadow:0 1px 1px rgba(0,0,0,0.3)"></div>
<div class="a" style="left:3117.2px;top:766px;width:17px;height:17px;background:#f2e07e;box-shadow:0 1px 1px rgba(0,0,0,0.3)"></div>
<div class="a" style="left:3153.0px;top:766px;width:17px;height:17px;background:#bbe08c;box-shadow:0 1px 1px rgba(0,0,0,0.3)"></div>
<div class="a" style="left:3189.1px;top:766px;width:17px;height:17px;background:#8cc6f5;box-shadow:0 1px 1px rgba(0,0,0,0.3)"></div>
<div class="a" style="left:3225.2px;top:766px;width:17px;height:17px;background:#d8b3ea;box-shadow:0 1px 1px rgba(0,0,0,0.3)"></div>
<div class="a" style="left:3261.0px;top:766px;width:17px;height:17px;background:#d2d2d2;box-shadow:0 1px 1px rgba(0,0,0,0.3)"></div>
<div class="t" style="left:2599px;width:400px;text-align:right;top:806.1px;font-size:21.2px;color:#e4e4e4;font-weight:400">Object ID</div>
<div class="t" style="left:3012.8px;top:804.3px;font-size:23.3px;color:#ececec;font-weight:400;">vhh-2G-PJS</div>
<div class="t" style="left:2599px;width:400px;text-align:right;top:846.1px;font-size:21.2px;color:#e4e4e4;font-weight:400">Lock</div>
<div class="a" style="left:3010px;top:840px;width:334px;height:31px;background:linear-gradient(#727275,#676769);border-radius:5px;box-shadow:0 1px 1px rgba(0,0,0,0.35)"></div>
<div class="a" style="left:3316px;top:840px;width:28px;height:31px;background:linear-gradient(#2b79ec,#1c62d3);border-radius:0 5px 5px 0"></div>
<svg style="left:3322px;top:845px" width="16" height="22"><path d="M2 8 L8 2 L14 8 M2 14 L8 20 L14 14" stroke="#fff" stroke-width="2" fill="none"/></svg>
<div class="t" style="left:3024px;top:843.7px;font-size:24px;color:#f0f0f0;font-weight:400;">Inherited - (Nothing)</div>
<div class="t" style="left:2599px;width:400px;text-align:right;top:892.6px;font-size:21.2px;color:#e4e4e4;font-weight:400">Localizer Hint</div>
<div class="a" style="left:3009px;top:883px;width:336px;height:35px;background:#47474a;border-top:1px solid #3d3d40;border-bottom:2px solid #626265"></div>
<div class="t" style="left:3016px;top:889.6px;font-size:23.5px;color:#77777a;font-weight:400;">Comment For Localizer</div>
<div class="a" style="left:2842px;top:950px;width:518px;height:2px;background:#4e4e51"></div>
<div class="t" style="left:2850.6px;top:960.4px;font-size:20.8px;color:#e6e6e6;font-weight:700;">Accessibility</div>
<div class="t" style="left:2599px;width:400px;text-align:right;top:1001.8px;font-size:21.2px;color:#e4e4e4;font-weight:400">Accessibility</div>
<div class="a" style="left:3008.5px;top:1000px;width:24px;height:24px;background:linear-gradient(#646467,#5b5b5e);border-radius:5px;box-shadow:inset 0 1px 0 #6e6e71,0 1px 1px rgba(0,0,0,0.3)"></div>
<div class="t" style="left:3042.7px;top:999.8px;font-size:23.5px;color:#e4e4e4;font-weight:400;">Enabled</div>
<div class="t" style="left:2599px;width:400px;text-align:right;top:1044.1px;font-size:21.2px;color:#e4e4e4;font-weight:400">Label</div>
<div class="a" style="left:3009px;top:1035px;width:336px;height:36px;background:#47474a;border-top:1px solid #3d3d40;border-bottom:2px solid #626265"></div>
<div class="t" style="left:3016px;top:1041.1px;font-size:23.5px;color:#77777a;font-weight:400;">Label</div>
<div class="t" style="left:2599px;width:400px;text-align:right;top:1089.8px;font-size:21.2px;color:#e4e4e4;font-weight:400">Hint</div>
<div class="a" style="left:3009px;top:1081px;width:336px;height:35px;background:#47474a;border-top:1px solid #3d3d40;border-bottom:2px solid #626265"></div>
<div class="t" style="left:3016px;top:1086.8px;font-size:23.5px;color:#77777a;font-weight:400;">Hint</div>
<div class="t" style="left:2599px;width:400px;text-align:right;top:1136.1px;font-size:21.2px;color:#e4e4e4;font-weight:400">Identifier</div>
<div class="a" style="left:3009px;top:1127px;width:336px;height:35px;background:#47474a;border-top:1px solid #3d3d40;border-bottom:2px solid #626265"></div>
<div class="t" style="left:3016px;top:1133.1px;font-size:23.5px;color:#77777a;font-weight:400;">Identifier</div>
<div class="a" style="left:2856px;top:1172px;width:488px;height:2px;background:#4e4e51"></div>
<div class="t" style="left:2599px;width:400px;text-align:right;top:1186.7px;font-size:21.2px;color:#e4e4e4;font-weight:400">Traits</div>
<div class="a" style="left:3008px;top:1184.6px;width:24px;height:24px;background:linear-gradient(#646467,#5b5b5e);border-radius:5px;box-shadow:inset 0 1px 0 #6e6e71,0 1px 1px rgba(0,0,0,0.3)"></div>
<div class="t" style="left:3042px;top:1184.7px;font-size:23.5px;color:#e4e4e4;font-weight:400;">Button</div>
<div class="a" style="left:3008px;top:1220.6px;width:24px;height:24px;background:linear-gradient(#646467,#5b5b5e);border-radius:5px;box-shadow:inset 0 1px 0 #6e6e71,0 1px 1px rgba(0,0,0,0.3)"></div>
<div class="t" style="left:3042px;top:1220.7px;font-size:23.5px;color:#e4e4e4;font-weight:400;">Image</div>
<div class="a" style="left:3008px;top:1256.6px;width:24px;height:24px;background:linear-gradient(#646467,#5b5b5e);border-radius:5px;box-shadow:inset 0 1px 0 #6e6e71,0 1px 1px rgba(0,0,0,0.3)"></div>
<div class="t" style="left:3042px;top:1256.7px;font-size:23.5px;color:#e4e4e4;font-weight:400;">Static Text</div>
<div class="a" style="left:3008px;top:1292.6px;width:24px;height:24px;background:linear-gradient(#646467,#5b5b5e);border-radius:5px;box-shadow:inset 0 1px 0 #6e6e71,0 1px 1px rgba(0,0,0,0.3)"></div>
<div class="t" style="left:3042px;top:1292.7px;font-size:23.5px;color:#e4e4e4;font-weight:400;">Search Field</div>
<div class="a" style="left:3008px;top:1328.6px;width:24px;height:24px;background:linear-gradient(#646467,#5b5b5e);border-radius:5px;box-shadow:inset 0 1px 0 #6e6e71,0 1px 1px rgba(0,0,0,0.3)"></div>
<div class="t" style="left:3042px;top:1328.7px;font-size:23.5px;color:#e4e4e4;font-weight:400;">Plays Sound</div>
<div class="a" style="left:3008px;top:1364.6px;width:24px;height:24px;background:linear-gradient(#646467,#5b5b5e);border-radius:5px;box-shadow:inset 0 1px 0 #6e6e71,0 1px 1px rgba(0,0,0,0.3)"></div>
<div class="t" style="left:3042px;top:1364.7px;font-size:23.5px;color:#e4e4e4;font-weight:400;">Keyboard Key</div>
<div class="a" style="left:3008px;top:1400.6px;width:24px;height:24px;background:linear-gradient(#646467,#5b5b5e);border-radius:5px;box-shadow:inset 0 1px 0 #6e6e71,0 1px 1px rgba(0,0,0,0.3)"></div>
<div class="t" style="left:3042px;top:1400.7px;font-size:23.5px;color:#e4e4e4;font-weight:400;">Summary Element</div>
<div class="a" style="left:3008px;top:1436.6px;width:24px;height:24px;background:linear-gradient(#2b79ec,#1c62d3);border-radius:5px"></div><svg style="left:3012px;top:1441.6px" width="17" height="15"><path d="M2 7.5 L6.5 12 L15 2.5" stroke="#fff" stroke-width="2.6" fill="none"/></svg>
<div class="t" style="left:3042px;top:1436.7px;font-size:23.5px;color:#e4e4e4;font-weight:400;">User Interaction Enabled</div>
<div class="a" style="left:3008px;top:1472.6px;width:24px;height:24px;background:linear-gradient(#646467,#5b5b5e);border-radius:5px;box-shadow:inset 0 1px 0 #6e6e71,0 1px 1px rgba(0,0,0,0.3)"></div>
<div class="t" style="left:3042px;top:1472.7px;font-size:23.5px;color:#e4e4e4;font-weight:400;">Updates Frequently</div>
<div class="a" style="left:3008px;top:1508.6px;width:24px;height:24px;background:linear-gradient(#646467,#5b5b5e);border-radius:5px;box-shadow:inset 0 1px 0 #6e6e71,0 1px 1px rgba(0,0,0,0.3)"></div>
<div class="t" style="left:3042px;top:1508.7px;font-size:23.5px;color:#e4e4e4;font-weight:400;">Starts Media Session</div>
<div class="a" style="left:3008px;top:1544.6px;width:24px;height:24px;background:linear-gradient(#646467,#5b5b5e);border-radius:5px;box-shadow:inset 0 1px 0 #6e6e71,0 1px 1px rgba(0,0,0,0.3)"></div>
<div class="t" style="left:3042px;top:1544.7px;font-size:23.5px;color:#e4e4e4;font-weight:400;">Adjustable</div>
<div class="a" style="left:3008px;top:1580.6px;width:24px;height:24px;background:linear-gradient(#646467,#5b5b5e);border-radius:5px;box-shadow:inset 0 1px 0 #6e6e71,0 1px 1px rgba(0,0,0,0.3)"></div>
<div class="t" style="left:3042px;top:1580.7px;font-size:23.5px;color:#e4e4e4;font-weight:400;">Allows Direct Interaction</div>
<div class="a" style="left:3008px;top:1616.6px;width:24px;height:24px;background:linear-gradient(#646467,#5b5b5e);border-radius:5px;box-shadow:inset 0 1px 0 #6e6e71,0 1px 1px rgba(0,0,0,0.3)"></div>
<div class="t" style="left:3042px;top:1616.7px;font-size:23.5px;color:#e4e4e4;font-weight:400;">Causes Page Turn</div>
<div class="a" style="left:3008px;top:1652.6px;width:24px;height:24px;background:linear-gradient(#646467,#5b5b5e);border-radius:5px;box-shadow:inset 0 1px 0 #6e6e71,0 1px 1px rgba(0,0,0,0.3)"></div>
<div class="t" style="left:3042px;top:1652.7px;font-size:23.5px;color:#e4e4e4;font-weight:400;">Header</div>
<div class="a" style="left:3184px;top:1184.6px;width:24px;height:24px;background:linear-gradient(#646467,#5b5b5e);border-radius:5px;box-shadow:inset 0 1px 0 #6e6e71,0 1px 1px rgba(0,0,0,0.3)"></div>
<div class="t" style="left:3218px;top:1184.7px;font-size:23.5px;color:#e4e4e4;font-weight:400;">Link</div>
<div class="a" style="left:3184px;top:1220.6px;width:24px;height:24px;background:linear-gradient(#646467,#5b5b5e);border-radius:5px;box-shadow:inset 0 1px 0 #6e6e71,0 1px 1px rgba(0,0,0,0.3)"></div>
<div class="t" style="left:3218px;top:1220.7px;font-size:23.5px;color:#e4e4e4;font-weight:400;">Selected</div>
<div class="a" style="left:2842px;top:1707px;width:518px;height:2px;background:#4e4e51"></div>
<div class="a" style="left:3358px;top:0;width:2px;height:1884px;background:#6a6a6c"></div><!-- ARROW -->
<svg style="left:0;top:0;pointer-events:none" width="3360" height="1884"><path d="M1581.0 589.1 L1581.1 584.8 L1581.3 580.5 L1581.4 576.2 L1581.6 572.0 L1581.7 567.7 L1581.9 563.4 L1582.0 559.2 L1582.2 554.9 L1582.4 550.7 L1582.7 546.5 L1583.0 542.4 L1583.3 538.3 L1583.6 534.2 L1584.0 530.1 L1584.4 526.1 L1584.9 522.1 L1585.3 518.1 L1585.8 514.1 L1586.4 510.2 L1586.9 506.3 L1587.5 502.4 L1588.2 498.5 L1588.8 494.6 L1589.5 490.8 L1590.2 487.0 L1591.0 483.2 L1591.8 479.5 L1592.6 475.8 L1593.4 472.1 L1594.3 468.4 L1595.2 464.8 L1596.2 461.1 L1597.3 457.5 L1598.3 453.8 L1599.5 450.1 L1600.7 446.4 L1602.0 442.7 L1603.3 439.0 L1604.7 435.3 L1606.2 431.5 L1607.7 427.8 L1609.3 424.0 L1610.9 420.3 L1612.5 416.6 L1614.2 413.0 L1616.0 409.4 L1617.8 405.9 L1619.6 402.4 L1621.4 399.0 L1623.4 395.7 L1625.3 392.4 L1627.3 389.2 L1629.3 386.1 L1631.4 382.9 L1633.5 379.8 L1635.7 376.7 L1637.9 373.7 L1640.2 370.6 L1642.5 367.6 L1644.8 364.6 L1647.2 361.6 L1649.6 358.6 L1652.0 355.7 L1654.5 352.7 L1656.9 349.8 L1659.5 346.9 L1662.1 344.1 L1664.8 341.2 L1667.6 338.3 L1670.5 335.5 L1673.5 332.6 L1676.6 329.7 L1679.9 326.8 L1683.3 323.8 L1686.9 320.8 L1690.6 317.8 L1694.4 314.8 L1698.2 311.8 L1702.1 308.9 L1705.9 306.0 L1709.7 303.1 L1713.4 300.4 L1716.9 297.7 L1720.3 295.1 L1723.6 292.7 L1726.7 290.3 L1729.6 288.1 L1732.5 285.9 L1735.3 283.9 L1738.1 281.8 L1740.8 279.8 L1743.6 277.8 L1746.5 275.7 L1749.6 273.7 L1752.7 271.5 L1756.0 269.3 L1759.5 267.0 L1763.2 264.7 L1767.0 262.2 L1770.9 259.8 L1774.9 257.3 L1778.9 254.8 L1783.0 252.4 L1787.1 250.0 L1791.1 247.6 L1795.2 245.4 L1799.1 243.2 L1803.0 241.2 L1806.8 239.2 L1810.6 237.4 L1814.3 235.6 L1818.0 234.0 L1821.6 232.4 L1825.3 230.8 L1828.9 229.3 L1832.6 227.8 L1836.3 226.4 L1840.0 224.9 L1843.8 223.4 L1847.6 221.9 L1851.5 220.4 L1855.4 218.9 L1859.3 217.3 L1863.3 215.8 L1867.3 214.3 L1871.3 212.8 L1875.3 211.3 L1879.3 209.9 L1883.3 208.5 L1887.2 207.2 L1891.1 205.9 L1894.9 204.6 L1898.6 203.5 L1902.2 202.4 L1905.8 201.3 L1909.2 200.4 L1912.7 199.4 L1916.2 198.5 L1919.8 197.5 L1923.6 196.6 L1927.6 195.6 L1931.8 194.5 L1936.4 193.4 L1941.4 192.1 L1946.7 190.8 L1952.3 189.4 L1958.3 187.9 L1964.5 186.3 L1971.0 184.7 L1977.6 183.1 L1984.3 181.5 L1991.1 179.9 L1997.9 178.3 L2004.6 176.8 L2011.3 175.4 L2017.9 174.0 L2024.5 172.7 L2031.0 171.5 L2037.5 170.3 L2043.9 169.1 L2050.4 168.0 L2056.8 167.0 L2063.3 166.0 L2069.8 165.0 L2076.2 164.0 L2082.7 163.1 L2089.2 162.2 L2095.6 161.4 L2102.1 160.5 L2108.5 159.8 L2115.0 159.0 L2121.4 158.3 L2127.9 157.7 L2134.3 157.0 L2140.8 156.4 L2147.3 155.8 L2153.7 155.2 L2160.2 154.6 L2166.7 154.1 L2173.1 153.5 L2179.6 152.9 L2186.1 152.4 L2192.5 151.9 L2199.0 151.4 L2205.5 150.8 L2211.9 150.4 L2218.4 149.9 L2224.9 149.4 L2231.3 149.0 L2237.8 148.5 L2244.3 148.1 L2250.7 147.7 L2257.2 147.3 L2263.7 147.0 L2270.1 146.6 L2276.6 146.3 L2283.1 145.9 L2289.5 145.6 L2296.0 145.4 L2302.4 145.1 L2308.9 144.8 L2315.3 144.6 L2321.8 144.4 L2328.2 144.2 L2334.5 144.1 L2340.9 144.0 L2347.2 143.9 L2353.5 143.8 L2359.7 143.7 L2366.0 143.7 L2372.4 143.7 L2378.9 143.7 L2385.5 143.7 L2392.2 143.8 L2399.0 143.8 L2406.0 143.9 L2413.1 144.0 L2420.3 144.2 L2427.5 144.3 L2434.9 144.5 L2442.4 144.7 L2450.1 144.9 L2457.9 145.1 L2466.0 145.4 L2474.4 145.8 L2483.0 146.2 L2492.0 146.6 L2501.4 147.1 L2511.2 147.7 L2521.3 148.4 L2531.8 149.1 L2542.6 149.8 L2553.7 150.6 L2565.0 151.5 L2576.4 152.4 L2587.9 153.4 L2599.4 154.3 L2610.9 155.3 L2622.4 156.3 L2633.9 157.4 L2645.4 158.5 L2657.0 159.6 L2668.7 160.8 L2680.5 162.0 L2692.3 163.2 L2703.9 164.5 L2715.4 165.7 L2726.5 166.9 L2737.2 168.1 L2747.4 169.2 L2757.1 170.3 L2766.1 171.3 L2774.5 172.3 L2782.2 173.2 L2789.5 174.1 L2796.2 174.9 L2802.5 175.7 L2808.5 176.4 L2814.2 177.1 L2819.7 177.8 L2825.0 178.5 L2830.2 179.1 L2835.3 179.7 L2840.4 180.3 L2845.3 180.9 L2850.1 181.4 L2854.7 181.9 L2859.2 182.4 L2863.6 182.8 L2867.8 183.3 L2872.0 183.7 L2876.1 184.1 L2880.2 184.5 L2884.3 184.9 L2888.4 185.3 L2892.6 185.7 L2893.4 177.3 L2889.2 176.9 L2885.1 176.5 L2880.9 176.2 L2876.8 175.8 L2872.7 175.5 L2868.6 175.1 L2864.3 174.8 L2860.0 174.4 L2855.5 174.0 L2850.9 173.5 L2846.1 173.1 L2841.2 172.6 L2836.2 172.0 L2831.1 171.5 L2825.9 170.9 L2820.6 170.3 L2815.1 169.7 L2809.4 169.0 L2803.4 168.4 L2797.1 167.7 L2790.3 166.9 L2783.0 166.1 L2775.2 165.3 L2766.8 164.4 L2757.8 163.5 L2748.1 162.5 L2737.9 161.5 L2727.2 160.4 L2716.0 159.3 L2704.6 158.2 L2692.9 157.1 L2681.1 156.0 L2669.3 154.9 L2657.6 153.8 L2645.9 152.8 L2634.4 151.8 L2622.9 150.8 L2611.4 149.9 L2599.9 148.9 L2588.3 148.0 L2576.8 147.2 L2565.4 146.3 L2554.1 145.5 L2543.0 144.7 L2532.1 144.0 L2521.6 143.3 L2511.5 142.7 L2501.7 142.1 L2492.3 141.6 L2483.3 141.2 L2474.6 140.8 L2466.2 140.4 L2458.1 140.1 L2450.2 139.9 L2442.6 139.7 L2435.0 139.5 L2427.6 139.3 L2420.4 139.2 L2413.2 139.0 L2406.1 138.9 L2399.1 138.8 L2392.2 138.8 L2385.5 138.7 L2378.9 138.7 L2372.4 138.7 L2366.0 138.7 L2359.7 138.7 L2353.4 138.8 L2347.1 138.9 L2340.8 139.0 L2334.4 139.1 L2328.0 139.2 L2321.6 139.4 L2315.2 139.6 L2308.7 139.8 L2302.2 140.1 L2295.8 140.4 L2289.3 140.6 L2282.8 141.0 L2276.3 141.3 L2269.9 141.6 L2263.4 142.0 L2256.9 142.3 L2250.4 142.7 L2244.0 143.1 L2237.5 143.5 L2231.0 144.0 L2224.5 144.4 L2218.0 144.9 L2211.6 145.4 L2205.1 145.9 L2198.6 146.4 L2192.1 146.9 L2185.6 147.4 L2179.2 148.0 L2172.7 148.5 L2166.2 149.1 L2159.7 149.6 L2153.3 150.2 L2146.8 150.8 L2140.3 151.4 L2133.9 152.0 L2127.4 152.7 L2120.9 153.4 L2114.4 154.1 L2107.9 154.8 L2101.5 155.6 L2095.0 156.4 L2088.5 157.3 L2082.0 158.1 L2075.5 159.1 L2069.0 160.0 L2062.5 161.0 L2056.1 162.0 L2049.6 163.1 L2043.1 164.2 L2036.6 165.4 L2030.1 166.5 L2023.5 167.8 L2016.9 169.1 L2010.3 170.5 L2003.6 171.9 L1996.8 173.4 L1990.0 175.0 L1983.2 176.6 L1976.4 178.2 L1969.8 179.9 L1963.3 181.5 L1957.1 183.0 L1951.1 184.5 L1945.5 185.9 L1940.2 187.3 L1935.2 188.5 L1930.6 189.6 L1926.4 190.7 L1922.3 191.7 L1918.5 192.7 L1914.9 193.6 L1911.4 194.6 L1907.9 195.5 L1904.4 196.5 L1900.8 197.6 L1897.2 198.7 L1893.4 199.9 L1889.6 201.1 L1885.6 202.4 L1881.7 203.8 L1877.6 205.2 L1873.6 206.6 L1869.6 208.1 L1865.5 209.6 L1861.5 211.1 L1857.5 212.7 L1853.6 214.2 L1849.7 215.7 L1845.8 217.2 L1842.0 218.7 L1838.2 220.2 L1834.4 221.7 L1830.7 223.2 L1827.0 224.7 L1823.3 226.2 L1819.6 227.8 L1815.9 229.4 L1812.2 231.1 L1808.4 232.9 L1804.6 234.7 L1800.7 236.7 L1796.7 238.8 L1792.7 241.0 L1788.7 243.3 L1784.6 245.6 L1780.4 248.1 L1776.3 250.6 L1772.2 253.1 L1768.2 255.6 L1764.3 258.0 L1760.5 260.5 L1756.8 262.8 L1753.3 265.1 L1749.9 267.4 L1746.7 269.5 L1743.7 271.6 L1740.7 273.7 L1737.9 275.7 L1735.1 277.8 L1732.3 279.8 L1729.5 281.9 L1726.6 284.1 L1723.7 286.4 L1720.6 288.7 L1717.3 291.2 L1713.9 293.7 L1710.4 296.4 L1706.7 299.1 L1702.9 302.0 L1699.1 304.9 L1695.2 307.9 L1691.3 310.9 L1687.5 313.9 L1683.7 317.0 L1680.1 320.0 L1676.6 323.0 L1673.2 326.0 L1670.0 329.0 L1667.0 331.9 L1664.0 334.8 L1661.2 337.8 L1658.4 340.7 L1655.8 343.6 L1653.2 346.5 L1650.6 349.5 L1648.2 352.5 L1645.7 355.5 L1643.3 358.5 L1640.9 361.5 L1638.5 364.6 L1636.2 367.6 L1633.9 370.7 L1631.6 373.8 L1629.4 377.0 L1627.3 380.1 L1625.1 383.3 L1623.1 386.6 L1621.0 389.9 L1619.0 393.2 L1617.1 396.6 L1615.2 400.1 L1613.3 403.6 L1611.5 407.2 L1609.7 410.8 L1608.0 414.5 L1606.3 418.3 L1604.7 422.1 L1603.1 425.9 L1601.5 429.7 L1600.0 433.5 L1598.6 437.3 L1597.3 441.1 L1596.0 444.9 L1594.7 448.6 L1593.6 452.3 L1592.4 456.1 L1591.4 459.8 L1590.4 463.5 L1589.5 467.2 L1588.6 471.0 L1587.7 474.7 L1586.9 478.5 L1586.1 482.2 L1585.3 486.1 L1584.6 489.9 L1583.9 493.8 L1583.2 497.7 L1582.6 501.6 L1582.0 505.5 L1581.4 509.5 L1580.9 513.5 L1580.4 517.5 L1579.9 521.5 L1579.4 525.6 L1579.0 529.6 L1578.6 533.7 L1578.3 537.9 L1578.0 542.0 L1577.7 546.2 L1577.4 550.4 L1577.2 554.7 L1577.0 558.9 L1576.9 563.2 L1576.7 567.5 L1576.6 571.8 L1576.4 576.1 L1576.3 580.4 L1576.2 584.6 L1576.0 588.9 Z" fill="#fc2a1d"/><path d="M2916.5 183.3 L2891.5 166.4 L2887.3 193.4 Z" fill="#fc2a1d" stroke="#fc2a1d" stroke-width="1" stroke-linejoin="round"/></svg>
</body></html>
